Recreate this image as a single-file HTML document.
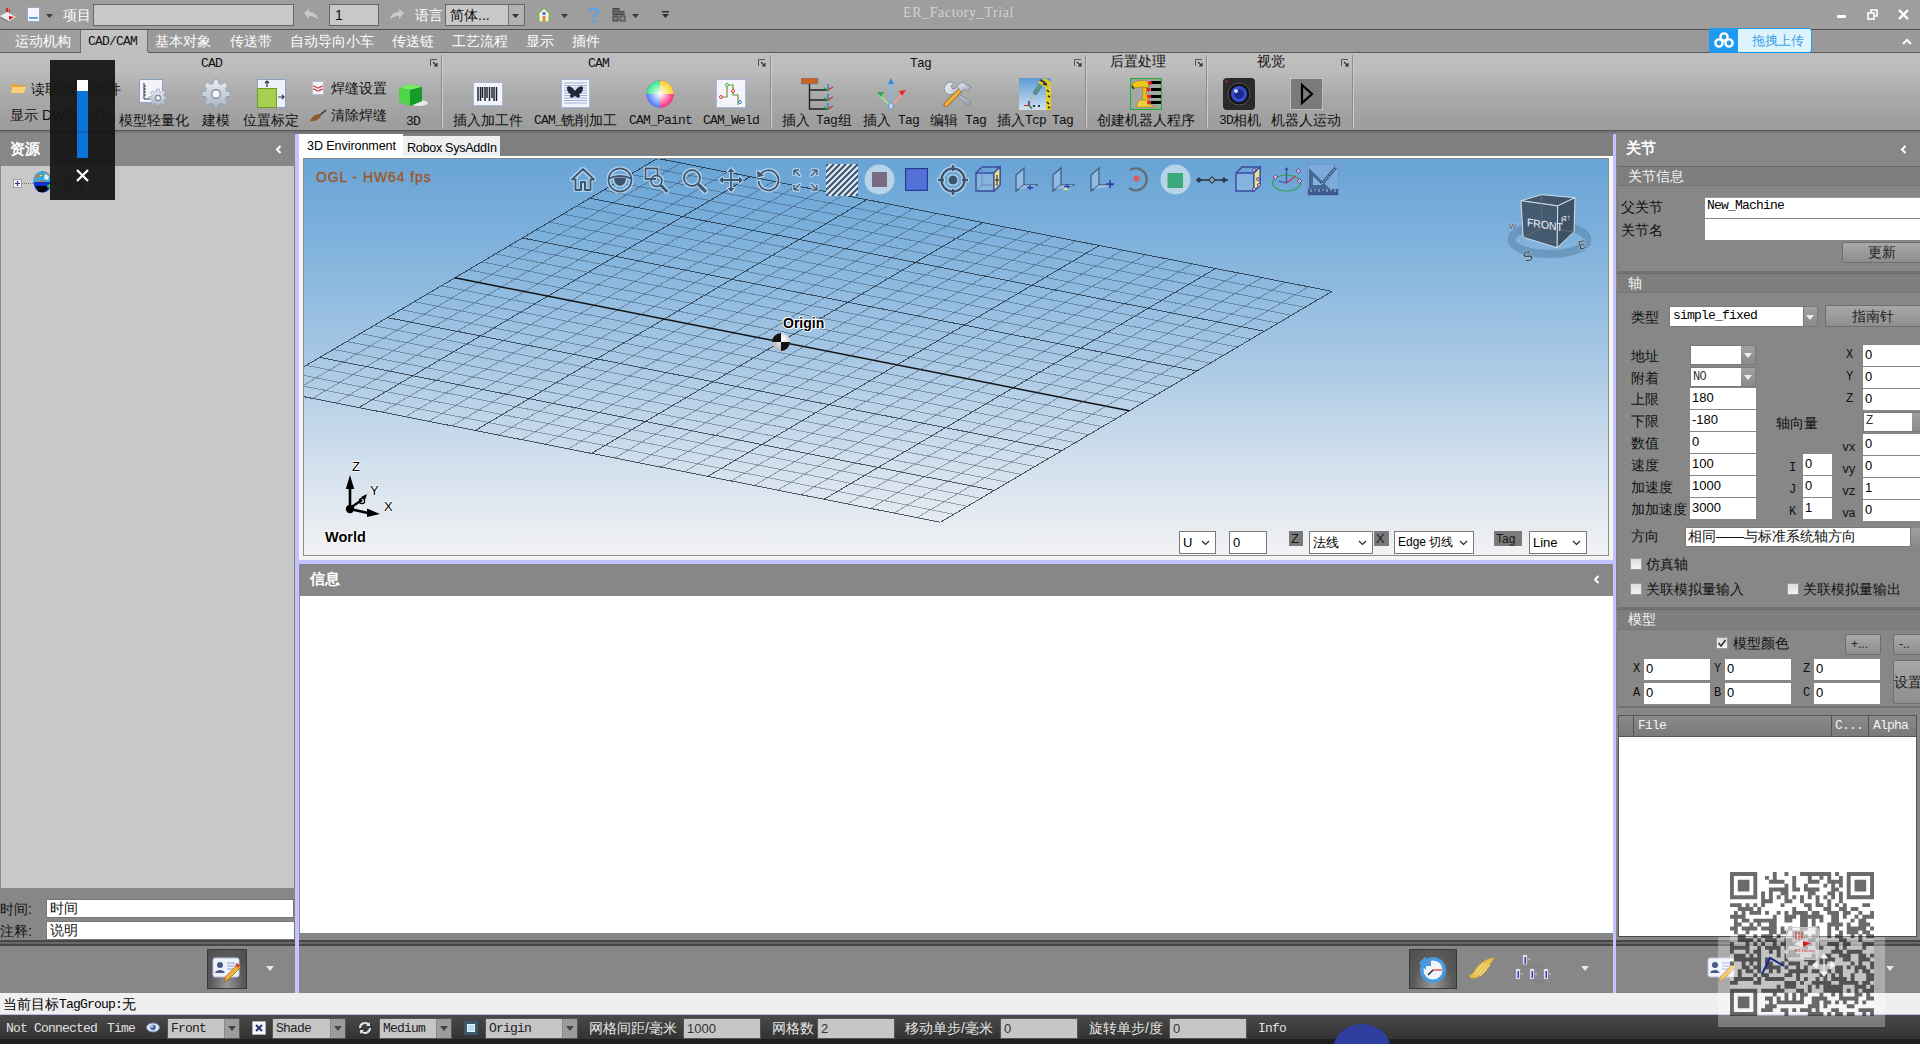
<!DOCTYPE html><html><head><meta charset='utf-8'><style>
*{box-sizing:border-box;margin:0;padding:0}
html,body{width:1920px;height:1044px;overflow:hidden;background:#9e9e9e;font-family:"Liberation Sans",sans-serif;font-size:14px;color:#000}
.a{position:absolute}
.ss{font-family:"Liberation Mono",monospace;font-size:13px;letter-spacing:-0.8px}
.t{position:absolute;white-space:nowrap;line-height:1}
.w{color:#fff}
.inp{position:absolute;background:#fff;border:1px solid #6d6d6d}
.ginp{position:absolute;background:#c8c8c8;border:1px solid #6a6a6a}
</style></head><body><div class="a" style="left:0px;top:0px;width:1920px;height:29px;background:#9e9e9e"></div>
<div class="a" style="left:0px;top:29px;width:1920px;height:1px;background:#4e4e4e"></div>
<div class="a" style="left:0px;top:30px;width:1920px;height:22px;background:#9a9a9a"></div>
<div class="a" style="left:0px;top:52px;width:1920px;height:1px;background:#5a5a5a"></div>
<div class="a" style="left:0px;top:53px;width:1920px;height:77px;background:linear-gradient(#bfbfbf,#bcbcbc 22%,#aaaaaa 55%,#9c9c9c)"></div>
<div class="a" style="left:0px;top:130px;width:1920px;height:1px;background:#555"></div>
<div class="a" style="left:0px;top:131px;width:1920px;height:863px;background:#7f7f7f"></div>
<svg class="a" style="left:0;top:7px" width="16" height="16" viewBox="0 0 16 16"><path d="M6 1h2v4H6zM9 2h1v3H9z" fill="#d22"/><path d="M0 9l7-4 9 5-7 4z" fill="#eee"/><path d="M9 9l5 1-5 3z" fill="#d11"/><path d="M1 10l7 4v1L0 11z" fill="#888"/></svg>
<svg class="a" style="left:27px;top:7px" width="13" height="15" viewBox="0 0 13 15"><rect x="0.5" y="0.5" width="12" height="14" fill="#f4f6fb" stroke="#9aa7c8"/><rect x="2" y="10" width="9" height="2" fill="#6aa6e0"/></svg>
<svg class="a" style="left:46px;top:14px" width="7" height="4"><path d="M0 0H7L3.5 4z" fill="#3a3a3a"/></svg>
<div class="t w" style="left:63px;top:8px;font-size:14px">项目</div>
<div class="a" style="left:93px;top:4px;width:201px;height:22px;background:#c8c8c8;border:1px solid #666"></div>
<svg class="a" style="left:303px;top:9px" width="16" height="12" viewBox="0 0 16 12"><path d="M1 4L6 0v3c5 0 9 3 9 8-2-3-5-4-9-4v3z" fill="#c9c9c9"/></svg>
<div class="a" style="left:329px;top:4px;width:50px;height:22px;background:#c8c8c8;border:1px solid #666"></div>
<div class="t " style="left:335px;top:8px;font-size:14px;color:#111">1</div>
<svg class="a" style="left:389px;top:9px" width="16" height="12" viewBox="0 0 16 12"><path d="M15 4L10 0v3C5 3 1 6 1 11c2-3 5-4 9-4v3z" fill="#c9c9c9"/></svg>
<div class="t w" style="left:415px;top:8px;font-size:14px">语言</div>
<div class="a" style="left:445px;top:4px;width:80px;height:22px;background:#c8c8c8;border:1px solid #666"></div>
<div class="a" style="left:508px;top:5px;width:16px;height:20px;background:#b2b2b2;border-left:1px solid #777"></div>
<svg class="a" style="left:512px;top:14px" width="7" height="4"><path d="M0 0H7L3.5 4z" fill="#333"/></svg>
<div class="t " style="left:450px;top:8px;font-size:14px;color:#111">简体...</div>
<svg class="a" style="left:536px;top:7px" width="16" height="15" viewBox="0 0 16 15"><path d="M8 1L1 8h2v7h10V8h2z" fill="#f3f3f7" stroke="#7fb14a" stroke-width="1.2"/><rect x="6.5" y="9" width="3" height="6" fill="#e08a2a"/><rect x="6.5" y="5" width="3" height="3" fill="#5577bb"/></svg>
<svg class="a" style="left:561px;top:14px" width="7" height="4"><path d="M0 0H7L3.5 4z" fill="#3a3a3a"/></svg>
<svg class="a" style="left:588px;top:7px" width="11" height="16" viewBox="0 0 11 16"><path d="M1.5 4.5C1.5 1 9.5 0 9.5 4.5c0 3-3.5 3-3.5 6" fill="none" stroke="#5aa3e8" stroke-width="2.6"/><circle cx="5.5" cy="14" r="1.7" fill="#5aa3e8"/></svg>
<svg class="a" style="left:612px;top:8px" width="14" height="14" viewBox="0 0 14 14"><rect x="1" y="0.5" width="6" height="6" fill="#666" stroke="#444"/><rect x="8.5" y="3.5" width="3.5" height="3" fill="#777" stroke="#444"/><rect x="1" y="8" width="5" height="5" fill="#777" stroke="#444"/><rect x="8" y="8" width="5" height="5" fill="#888" stroke="#444"/></svg>
<svg class="a" style="left:632px;top:14px" width="7" height="4"><path d="M0 0H7L3.5 4z" fill="#3a3a3a"/></svg>
<svg class="a" style="left:661px;top:11px" width="9" height="9" viewBox="0 0 9 9"><rect x="1" y="0" width="7" height="1.5" fill="#333"/><path d="M1 3h7L4.5 7z" fill="#333"/></svg>
<div class="t " style="left:903px;top:6px;font-family:'Liberation Serif',serif;font-size:14px;color:#d2d2d2;letter-spacing:0.6px">ER_Factory_Trial</div>
<div class="a" style="left:1837px;top:15px;width:9px;height:3px;background:#fff;border-radius:1px"></div>
<svg class="a" style="left:1867px;top:9px" width="12" height="11" viewBox="0 0 12 11"><rect x="1" y="4" width="6" height="6" fill="none" stroke="#fff" stroke-width="1.6"/><path d="M4 3.5V1h6v6H7.5" fill="none" stroke="#fff" stroke-width="1.6"/></svg>
<svg class="a" style="left:1898px;top:9px" width="11" height="11" viewBox="0 0 11 11"><path d="M1 1L10 10M10 1L1 10" stroke="#fff" stroke-width="2.4"/></svg>
<div class="a" style="left:0px;top:30px;width:81px;height:22px;background:#9f9f9f;border-right:1px solid #6e6e6e"></div>
<div class="a" style="left:81px;top:30px;width:67px;height:23px;background:linear-gradient(#c4c4c4,#bdbdbd)"></div>
<div class="a" style="left:147px;top:30px;width:1px;height:22px;background:#6e6e6e"></div>
<div class="t w" style="left:15px;top:34px;font-size:14px">运动机构</div>
<div class="t w" style="left:155px;top:34px;font-size:14px">基本对象</div>
<div class="t w" style="left:230px;top:34px;font-size:14px">传送带</div>
<div class="t w" style="left:290px;top:34px;font-size:14px">自动导向小车</div>
<div class="t w" style="left:392px;top:34px;font-size:14px">传送链</div>
<div class="t w" style="left:452px;top:34px;font-size:14px">工艺流程</div>
<div class="t w" style="left:526px;top:34px;font-size:14px">显示</div>
<div class="t w" style="left:572px;top:34px;font-size:14px">插件</div>
<div class="t ss" style="left:88px;top:35px;font-size:13px;color:#111">CAD/CAM</div>
<div class="a" style="left:1709px;top:28px;width:103px;height:25px;background:#def4fd;border:1px solid #1e9bf0;border-radius:3px"></div>
<div class="a" style="left:1709px;top:28px;width:29px;height:25px;background:#1e9bf0;border-radius:3px 0 0 3px"></div>
<svg class="a" style="left:1714px;top:32px" width="20" height="16" viewBox="0 0 20 16"><circle cx="10" cy="5" r="3.6" fill="none" stroke="#fff" stroke-width="2.4"/><circle cx="5" cy="11" r="3.6" fill="none" stroke="#fff" stroke-width="2.4"/><circle cx="15" cy="11" r="3.6" fill="none" stroke="#fff" stroke-width="2.4"/></svg>
<div class="t " style="left:1752px;top:34px;font-size:13px;color:#3aa0ea">拖拽上传</div>
<svg class="a" style="left:1902px;top:38px" width="10" height="7" viewBox="0 0 10 7"><path d="M1 6L5 2l4 4" fill="none" stroke="#fff" stroke-width="2"/></svg>
<div class="a" style="left:441px;top:55px;width:1px;height:73px;background:#8a8a8a;box-shadow:1px 0 0 #cfcfcf"></div>
<div class="a" style="left:770px;top:55px;width:1px;height:73px;background:#8a8a8a;box-shadow:1px 0 0 #cfcfcf"></div>
<div class="a" style="left:1085px;top:55px;width:1px;height:73px;background:#8a8a8a;box-shadow:1px 0 0 #cfcfcf"></div>
<div class="a" style="left:1206px;top:55px;width:1px;height:73px;background:#8a8a8a;box-shadow:1px 0 0 #cfcfcf"></div>
<div class="a" style="left:1352px;top:55px;width:1px;height:73px;background:#8a8a8a;box-shadow:1px 0 0 #cfcfcf"></div>
<svg class="a" style="left:430px;top:59px" width="8" height="8" viewBox="0 0 8 8"><path d="M0.5 7V0.5H7" fill="none" stroke="#555"/><path d="M3 3l4 4M7 4v3H4" fill="none" stroke="#333" stroke-width="1.2"/></svg>
<svg class="a" style="left:758px;top:59px" width="8" height="8" viewBox="0 0 8 8"><path d="M0.5 7V0.5H7" fill="none" stroke="#555"/><path d="M3 3l4 4M7 4v3H4" fill="none" stroke="#333" stroke-width="1.2"/></svg>
<svg class="a" style="left:1074px;top:59px" width="8" height="8" viewBox="0 0 8 8"><path d="M0.5 7V0.5H7" fill="none" stroke="#555"/><path d="M3 3l4 4M7 4v3H4" fill="none" stroke="#333" stroke-width="1.2"/></svg>
<svg class="a" style="left:1195px;top:59px" width="8" height="8" viewBox="0 0 8 8"><path d="M0.5 7V0.5H7" fill="none" stroke="#555"/><path d="M3 3l4 4M7 4v3H4" fill="none" stroke="#333" stroke-width="1.2"/></svg>
<svg class="a" style="left:1341px;top:59px" width="8" height="8" viewBox="0 0 8 8"><path d="M0.5 7V0.5H7" fill="none" stroke="#555"/><path d="M3 3l4 4M7 4v3H4" fill="none" stroke="#333" stroke-width="1.2"/></svg>
<div class="t ss" style="left:201px;top:57px;font-size:13px;color:#111">CAD</div>
<div class="t ss" style="left:588px;top:57px;font-size:13px;color:#111">CAM</div>
<div class="t ss" style="left:910px;top:57px;font-size:13px;color:#111">Tag</div>
<div class="t " style="left:1110px;top:54px;font-size:14px;color:#111">后置处理</div>
<div class="t " style="left:1257px;top:54px;font-size:14px;color:#111">视觉</div>
<svg class="a" style="left:11px;top:82px" width="15" height="12" viewBox="0 0 15 12"><path d="M0 2h5l1 1h7v8H0z" fill="#e9a53a"/><path d="M1 5h14l-2 6H0z" fill="#fbd27a"/></svg>
<div class="t " style="left:31px;top:82px;font-size:14px;color:#111">读取DWG文件</div>
<div class="t " style="left:10px;top:108px;font-size:14px;color:#111">显示 DWG 文件</div>
<svg class="a" style="left:139px;top:79px" width="30" height="29" viewBox="0 0 30 29"><defs><linearGradient id="gg" x1="0" y1="0" x2="0" y2="1"><stop offset="0" stop-color="#e9edf3"/><stop offset="1" stop-color="#a9b3c2"/></linearGradient></defs><rect x="0.5" y="0.5" width="23" height="23" fill="#f2f4fa" stroke="#8fa0c8"/><path d="M5 4v16h6M5 7h2M5 10h2M5 13h2M5 16h2" stroke="#333" fill="none"/><path d="M25.41 17.43L27.86 17.42L27.86 20.58L25.41 20.57L24.64 22.43L26.38 24.15L24.15 26.38L22.43 24.64L20.57 25.41L20.58 27.86L17.42 27.86L17.43 25.41L15.57 24.64L13.85 26.38L11.62 24.15L13.36 22.43L12.59 20.57L10.14 20.58L10.14 17.42L12.59 17.43L13.36 15.57L11.62 13.85L13.85 11.62L15.57 13.36L17.43 12.59L17.42 10.14L20.58 10.14L20.57 12.59L22.43 13.36L24.15 11.62L26.38 13.85L24.64 15.57z" fill="url(#gg)" stroke="#8d97a8" stroke-width="0.7"/><circle cx="19" cy="19" r="2.6" fill="#f2f4f8" stroke="#7d889a" stroke-width="1.2"/></svg>
<svg class="a" style="left:201px;top:79px" width="30" height="30" viewBox="0 0 30 30"><path d="M25.69 12.39L29.27 12.45L29.27 17.55L25.69 17.61L24.40 20.71L26.90 23.29L23.29 26.90L20.71 24.40L17.61 25.69L17.55 29.27L12.45 29.27L12.39 25.69L9.29 24.40L6.71 26.90L3.10 23.29L5.60 20.71L4.31 17.61L0.73 17.55L0.73 12.45L4.31 12.39L5.60 9.29L3.10 6.71L6.71 3.10L9.29 5.60L12.39 4.31L12.45 0.73L17.55 0.73L17.61 4.31L20.71 5.60L23.29 3.10L26.90 6.71L24.40 9.29z" fill="url(#gg)" stroke="#8d97a8" stroke-width="0.8"/><circle cx="15" cy="15" r="5.2" fill="#8e99ab"/><circle cx="15" cy="15" r="3.6" fill="#f4f6f9"/></svg>
<div class="t " style="left:119px;top:113px;font-size:14px;color:#111">模型轻量化</div>
<div class="t " style="left:202px;top:113px;font-size:14px;color:#111">建模</div>
<svg class="a" style="left:257px;top:79px" width="29" height="29" viewBox="0 0 29 29"><rect x="0.5" y="0.5" width="28" height="28" fill="#eef1f8" stroke="#8fa0c8"/><rect x="0.5" y="9.5" width="19" height="19" fill="#a8d050" stroke="#6f9c2a"/><path d="M10 2v6M8 4l2-2 2 2M21 18h6M25 16l2 2-2 2" stroke="#335" fill="none" stroke-width="1.2"/></svg>
<div class="t " style="left:243px;top:113px;font-size:14px;color:#111">位置标定</div>
<svg class="a" style="left:312px;top:81px" width="12" height="14" viewBox="0 0 12 14"><rect x="0.5" y="0.5" width="11" height="13" fill="#f2f3f7" stroke="#b8bfd0"/><path d="M1 5c3 0 3 2 5 2s3-2 5-2M1 8c3 0 3 2 5 2s3-2 5-2" stroke="#d22" fill="none" stroke-width="1.2"/></svg>
<div class="t " style="left:331px;top:81px;font-size:14px;color:#111">焊缝设置</div>
<svg class="a" style="left:310px;top:109px" width="17" height="14" viewBox="0 0 17 14"><path d="M10 6L16 1" stroke="#333" stroke-width="1.6"/><path d="M0 12c2-4 5-7 10-7l1 2C9 11 4 13 0 12z" fill="#8a5a2a"/></svg>
<div class="t " style="left:331px;top:108px;font-size:14px;color:#111">清除焊缝</div>
<svg class="a" style="left:397px;top:82px" width="32" height="26" viewBox="0 0 32 26"><ellipse cx="22" cy="21" rx="9" ry="3" fill="#e8eaea"/><path d="M2 6l11-4 12 3v14l-12 5-11-4z" fill="#2db43a"/><path d="M2 6l11-4 12 3-12 3z" fill="#7ee86a"/><path d="M2 6l11 2v16l-11-4z" fill="#4fd44a"/><path d="M13 8l12-3v14l-12 5z" fill="#199b2a"/></svg>
<div class="t ss" style="left:406px;top:115px;font-size:13px;color:#111">3D</div>
<svg class="a" style="left:473px;top:82px" width="30" height="24" viewBox="0 0 30 24"><rect x="0.5" y="0.5" width="29" height="23" fill="#f3f5fb" stroke="#a8b6d8"/><path d="M5 5v14M7.5 5v14M9.5 5v11M12 5v14M14 5v11M16.5 5v14M19 5v11M21 5v14M23.5 5v14" stroke="#1b2330" stroke-width="1.5"/></svg>
<div class="t " style="left:453px;top:113px;font-size:14px;color:#111">插入加工件</div>
<svg class="a" style="left:561px;top:79px" width="29" height="29" viewBox="0 0 29 29"><rect x="0.5" y="0.5" width="28" height="28" fill="#f2f4fb" stroke="#a8b6d8"/><path d="M3 4h23M3 6.5h23M3 9h23M3 11.5h23M3 14h23M3 16.5h23M3 19h23M3 21.5h23M3 24h23" stroke="#8aa0d0" stroke-width="0.8"/><path d="M14 12c-3-5-8-6-8-3 0 3 2 6 4 6-2 2-1 6 4 2 5 4 6 0 4-2 2 0 4-3 4-6 0-3-5-2-8 3z" fill="#1f2937"/></svg>
<div class="t ss" style="left:534px;top:114px;font-size:13px;color:#111">CAM_</div>
<div class="t " style="left:561px;top:113px;font-size:14px;color:#111">铣削加工</div>
<svg class="a" style="left:646px;top:80px" width="28" height="28" viewBox="0 0 28 28"><defs><radialGradient id="wg" cx="50%" cy="50%" r="50%"><stop offset="0" stop-color="#fff"/><stop offset="1" stop-color="#fff" stop-opacity="0"/></radialGradient></defs><circle cx="14" cy="14" r="13.5" fill="#f0f"/><path d="M14 14L14 0.5A13.5 13.5 0 0 1 27.5 14z" fill="#f9d423"/><path d="M14 14L27.5 14A13.5 13.5 0 0 1 14 27.5z" fill="#ff2e7e"/><path d="M14 14L14 27.5A13.5 13.5 0 0 1 0.5 14z" fill="#4a7cff"/><path d="M14 14L0.5 14A13.5 13.5 0 0 1 14 0.5z" fill="#2ee88a"/><circle cx="14" cy="14" r="13.5" fill="url(#wg)"/></svg>
<div class="t ss" style="left:629px;top:114px;font-size:13px;color:#111">CAM_Paint</div>
<svg class="a" style="left:716px;top:79px" width="30" height="29" viewBox="0 0 30 29"><rect x="0.5" y="0.5" width="29" height="28" fill="#f3f5fb" stroke="#a8b6d8"/><path d="M5 18h6V6h6v10h5v10" fill="none" stroke="#6a9a2a" stroke-width="1.2"/><circle cx="5" cy="18" r="1.5" fill="#fff" stroke="#d33"/><circle cx="11" cy="6" r="1.5" fill="#fff" stroke="#4a4"/><circle cx="17" cy="12" r="1.5" fill="#fff" stroke="#d33"/><circle cx="24" cy="23" r="1.5" fill="#fff" stroke="#37c"/></svg>
<div class="t ss" style="left:703px;top:114px;font-size:13px;color:#111">CAM_Weld</div>
<svg class="a" style="left:801px;top:78px" width="33" height="32" viewBox="0 0 33 32"><rect x="0" y="0" width="17" height="6" fill="#c8641e" stroke="#5a7bbd" stroke-width="0.6"/><path d="M8.5 6v25h19M8.5 12h19M8.5 22h19" stroke="#222" fill="none" stroke-width="1.4"/><g id="ax"><path d="M27 12V6M27 12l5-3M27 12l-4-2" stroke-width="1.3" fill="none"/></g><path d="M27 12V6" stroke="#2a7be0" stroke-width="1.4"/><path d="M27 12l5-3" stroke="#e02a2a" stroke-width="1.4"/><path d="M27 12l-4-2" stroke="#2ab04a" stroke-width="1.4"/><path d="M27 22V16" stroke="#2a7be0" stroke-width="1.4"/><path d="M27 22l5-3" stroke="#e02a2a" stroke-width="1.4"/><path d="M27 22l-4-2" stroke="#2ab04a" stroke-width="1.4"/><path d="M27 31v-6" stroke="#2a7be0" stroke-width="1.4"/><path d="M27 31l5-3" stroke="#e02a2a" stroke-width="1.4"/><path d="M27 31l-4-2" stroke="#2ab04a" stroke-width="1.4"/></svg>
<div class="t " style="left:782px;top:113px;font-size:14px;color:#111">插入</div>
<div class="t ss" style="left:816px;top:114px;font-size:13px;color:#111">Tag</div>
<div class="t " style="left:838px;top:113px;font-size:14px;color:#111">组</div>
<svg class="a" style="left:875px;top:78px" width="32" height="32" viewBox="0 0 32 32"><path d="M16 28V4" stroke="#7ab8f0" stroke-width="2"/><path d="M13 6l3-6 3 6z" fill="#2a8be0"/><path d="M16 28L4 17" stroke="#9ee0a0" stroke-width="2"/><path d="M2 14l7 0-3 5z" fill="#2ab04a"/><path d="M16 28L29 15" stroke="#f0a0a0" stroke-width="2"/><path d="M31 12l-7 1 3 5z" fill="#e02a2a"/><ellipse cx="16" cy="28" rx="2.5" ry="3.5" fill="#bcd4f0" stroke="#6a8ac0"/></svg>
<div class="t " style="left:863px;top:113px;font-size:14px;color:#111">插入</div>
<div class="t ss" style="left:898px;top:114px;font-size:13px;color:#111">Tag</div>
<svg class="a" style="left:943px;top:81px" width="30" height="26" viewBox="0 0 30 26"><defs><linearGradient id="sil" x1="0" y1="0" x2="1" y2="1"><stop offset="0" stop-color="#eef1f5"/><stop offset="1" stop-color="#9aa4b4"/></linearGradient></defs><path d="M3 3.5a6 6 0 0 1 8-1.5l-3 3 1.5 3 3-0.5 2.5-3a6 6 0 0 1-2 7.5L27 19.5a2.6 2.6 0 0 1-3.5 3.8L11.5 12a6 6 0 0 1-8.5-8.5z" fill="url(#sil)" stroke="#7a8496" stroke-width="0.8"/><path d="M3 23.5L17 9.5" stroke="#9a6a20" stroke-width="5" stroke-linecap="round"/><path d="M3 23.5L17 9.5" stroke="#f0b040" stroke-width="3.2" stroke-linecap="round"/><path d="M14 5l5-4 9 5-3 4-4-2-3 3z" fill="url(#sil)" stroke="#7a8496" stroke-width="0.8"/></svg>
<div class="t " style="left:930px;top:113px;font-size:14px;color:#111">编辑</div>
<div class="t ss" style="left:965px;top:114px;font-size:13px;color:#111">Tag</div>
<svg class="a" style="left:1019px;top:78px" width="32" height="32" viewBox="0 0 32 32"><defs><linearGradient id="sky" x1="0" y1="0" x2="0" y2="1"><stop offset="0" stop-color="#5e9cd6"/><stop offset="1" stop-color="#cfe0f0"/></linearGradient></defs><rect width="32" height="32" fill="url(#sky)"/><path d="M27 9h5v23h-5z" fill="#e8d020"/><path d="M28 12l2 2M29 18l2 1M28 24l2 2M29 29l2 1" stroke="#222" stroke-width="1.6"/><path d="M19 4l7-4 6 4v7l-6-2-5-2z" fill="#d8c830"/><path d="M21 2l4 2 3 3M24 6l4 1" stroke="#333" stroke-width="1.6"/><path d="M14 15l6-9 3 2-6 9z" fill="#5a9a8a" stroke="#2a5a5a" stroke-width="0.5"/><path d="M15 16l-4 6-1 5" fill="none" stroke="#c8b070" stroke-width="1"/><path d="M10 27.5H5M10 27.5V23M10 27.5l3 3" stroke="#e02020" stroke-width="1.2"/><path d="M10 27.5V23" stroke="#2040e0" stroke-width="1.2"/><path d="M10 27.5l3 3" stroke="#20a020" stroke-width="1.2"/><circle cx="15" cy="28" r="1.1" fill="#111"/><circle cx="20" cy="28" r="1.1" fill="#111"/></svg>
<div class="t " style="left:997px;top:113px;font-size:14px;color:#111">插入</div>
<div class="t ss" style="left:1025px;top:114px;font-size:13px;color:#111">Tcp</div>
<div class="t ss" style="left:1052px;top:114px;font-size:13px;color:#111">Tag</div>
<svg class="a" style="left:1130px;top:78px" width="32" height="32" viewBox="0 0 32 32"><rect x="0.5" y="0.5" width="31" height="31" fill="#a6a6a6" stroke="#22b030" stroke-width="1.2"/><path d="M21 3h10v3H21zM21 10h10v3H21zM21 17h10v3H21zM21 23h10v3H21z" fill="#000"/><path d="M2 6c3-3 8-4 14-3l3 3-2 4-5-1-8 1z" fill="#f0c818" stroke="#8a7010" stroke-width="0.5"/><path d="M12 9l5 1-1 6 3 3-2 4-3 1-2-4 1-5z" fill="#e8c018" stroke="#8a7010" stroke-width="0.5"/><path d="M9 22h9l2 4 5 3H6z" fill="#f0d040" stroke="#8a7010" stroke-width="0.5"/><path d="M2 8l2 3" stroke="#333" stroke-width="1.4"/><circle cx="20" cy="5" r="2" fill="#e82020"/><circle cx="18.5" cy="11.5" r="2" fill="#e82020"/><circle cx="19" cy="18.5" r="2" fill="#e82020"/><circle cx="19" cy="24.5" r="2" fill="#e82020"/></svg>
<div class="t " style="left:1097px;top:113px;font-size:14px;color:#111">创建机器人程序</div>
<svg class="a" style="left:1223px;top:78px" width="32" height="32" viewBox="0 0 32 32"><rect x="0" y="0" width="32" height="32" rx="4" fill="#2a2a2a"/><circle cx="16" cy="16" r="11" fill="#111" stroke="#555"/><circle cx="16" cy="16" r="8" fill="#3a4bd0"/><circle cx="16" cy="16" r="5" fill="#1c2a8a"/><circle cx="13" cy="13" r="2" fill="#cfe0ff"/><circle cx="3.5" cy="3.5" r="1" fill="#e33"/></svg>
<div class="t ss" style="left:1219px;top:114px;font-size:13px;color:#111">3D</div>
<div class="t " style="left:1233px;top:113px;font-size:14px;color:#111">相机</div>
<svg class="a" style="left:1290px;top:78px" width="33" height="32" viewBox="0 0 33 32"><rect x="0" y="0" width="33" height="32" fill="#7a7a7a" stroke="#fff" stroke-width="1"/><path d="M12 7v18l10-9z" fill="none" stroke="#000" stroke-width="2.2"/></svg>
<div class="t " style="left:1271px;top:113px;font-size:14px;color:#111">机器人运动</div>
<div class="a" style="left:0px;top:131px;width:295px;height:35px;background:#878787"></div>
<div class="a" style="left:0px;top:166px;width:294px;height:722px;background:#c8c8c8;border-left:1px solid #8a8a8a"></div>
<div class="a" style="left:0px;top:888px;width:295px;height:52px;background:#878787"></div>
<div class="a" style="left:46px;top:899px;width:248px;height:19px;background:#fff;border:1px solid #777"></div>
<div class="a" style="left:46px;top:921px;width:249px;height:19px;background:#fff;border:1px solid #777"></div>
<div class="a" style="left:0px;top:940px;width:295px;height:6px;background:linear-gradient(#474747 0,#474747 2px,#6a6a6a 2px,#646464 4px,#474747 4px)"></div>
<div class="a" style="left:0px;top:946px;width:295px;height:47px;background:#878787"></div>
<div class="a" style="left:295px;top:134px;width:4px;height:859px;background:#c2c2fc"></div>
<div class="a" style="left:299px;top:131px;width:1314px;height:25px;background:#7f7f7f"></div>
<div class="a" style="left:299px;top:156px;width:1314px;height:404px;background:#eaeaea"></div>
<div class="a" style="left:303px;top:158px;width:1306px;height:398px;background:linear-gradient(#68a4d5,#a9c9e3 50%,#f2f2f4)"></div>
<div class="a" style="left:299px;top:560px;width:1314px;height:4px;background:#c2c2fc"></div>
<div class="a" style="left:299px;top:564px;width:1314px;height:32px;background:#878787"></div>
<div class="a" style="left:299px;top:596px;width:1314px;height:338px;background:#fff;border-left:1px solid #8a8a8a;border-bottom:1px solid #7a8290"></div>
<div class="a" style="left:299px;top:934px;width:1314px;height:6px;background:#878787"></div>
<div class="a" style="left:299px;top:940px;width:1314px;height:6px;background:linear-gradient(#474747 0,#474747 2px,#6a6a6a 2px,#646464 4px,#474747 4px)"></div>
<div class="a" style="left:299px;top:946px;width:1314px;height:47px;background:#878787"></div>
<div class="a" style="left:1613px;top:134px;width:3px;height:859px;background:#c2c2fc"></div>
<div class="a" style="left:1616px;top:131px;width:304px;height:863px;background:#878787"></div>
<div class="t w" style="left:10px;top:141px;font-size:15px;font-weight:bold">资源</div>
<svg class="a" style="left:275px;top:145px" width="7" height="9" viewBox="0 0 7 9"><path d="M5.5 1L2 4.5 5.5 8" fill="none" stroke="#fff" stroke-width="2"/></svg>
<div class="a" style="left:13px;top:179px;width:9px;height:9px;background:#f4f4f4;border:1px solid #9aa0aa"></div>
<svg class="a" style="left:13px;top:179px" width="9" height="9"><path d="M2 4.5h5M4.5 2v5" stroke="#2a3a8a" stroke-width="1.2"/></svg>
<svg class="a" style="left:22px;top:183px" width="11" height="1"><path d="M0 .5h11" stroke="#777" stroke-dasharray="1 1"/></svg>
<svg class="a" style="left:33px;top:171px" width="19" height="22" viewBox="0 0 19 22"><clipPath id="gc"><ellipse cx="9.5" cy="11" rx="9" ry="10.8"/></clipPath><g clip-path="url(#gc)"><rect width="19" height="22" fill="#1030d0"/><rect width="19" height="11" fill="#30b0e0"/><path d="M2 3h8v3H5v2H2zM11 1h5l2 4-3 1zM4 9h9v2H4z" fill="#8a8a8a"/><path d="M12 3l4 2-1 4-4-1z" fill="#d8f0ff"/><path d="M3 15h10l2 3-4 3H5z" fill="#050505"/><path d="M14 14l3-1 1 3-3 1z" fill="#30c030"/><rect x="7" y="4" width="2" height="1" fill="#e8f020"/></g></svg>
<div class="t " style="left:59px;top:177px;font-size:14px;color:#222">世界</div>
<div class="t " style="left:0px;top:902px;font-size:14px;color:#111">时间:</div>
<div class="t " style="left:0px;top:924px;font-size:14px;color:#111">注释:</div>
<div class="t " style="left:50px;top:901px;font-size:14px;color:#111">时间</div>
<div class="t " style="left:50px;top:923px;font-size:14px;color:#111">说明</div>
<div class="a" style="left:207px;top:949px;width:40px;height:40px;background:radial-gradient(ellipse at 50% 100%,#9a9a9a,#5a5a5a 60%,#4e4e4e);border:1px solid #3a3a3a"></div>
<svg class="a" style="left:212px;top:956px" width="30" height="28" viewBox="0 0 30 28"><rect x="1" y="2" width="26" height="19" rx="2" fill="#eef2fb" stroke="#b8c4dc"/><circle cx="8" cy="9" r="3" fill="#4a5a80"/><path d="M3 17c1-4 9-4 10 0z" fill="#4a5a80"/><path d="M15 7h8M15 10h8M15 13h6" stroke="#8aa0c8"/><path d="M12 26l2-6 12-12 3 3-12 12z" fill="#f0b030" stroke="#8a5a10" stroke-width="0.6"/><path d="M23 9l3 3 2-2-3-3z" fill="#e04040"/></svg>
<svg class="a" style="left:266px;top:966px" width="8" height="5"><path d="M0 0H8L4.0 5z" fill="#e8e8e8"/></svg>
<div class="a" style="left:50px;top:60px;width:65px;height:140px;background:rgba(24,24,24,0.96)"></div>
<div class="a" style="left:77px;top:80px;width:11px;height:11px;background:#fff"></div>
<div class="a" style="left:77px;top:91px;width:11px;height:67px;background:#0a74d8"></div>
<svg class="a" style="left:75px;top:168px" width="15" height="15" viewBox="0 0 15 15"><path d="M2 2l11 11M13 2L2 13" stroke="#fff" stroke-width="2.3"/></svg>
<div class="a" style="left:299px;top:134px;width:104px;height:23px;background:#fff"></div>
<div class="t " style="left:307px;top:140px;font-size:12.6px;color:#000;letter-spacing:-0.1px">3D Environment</div>
<div class="a" style="left:403px;top:136px;width:97px;height:21px;background:#efefef"></div>
<div class="t " style="left:407px;top:142px;font-size:12.6px;color:#000;letter-spacing:-0.3px">Robox SysAddIn</div>
<div class="a" style="left:299px;top:156px;width:1314px;height:404px;background:#f4f4f4;border-top:2px solid #fff"></div>
<div class="a" style="left:303px;top:158px;width:1306px;height:398px;background:#8c8c8c"></div>
<div class="a" style="left:304px;top:159px;width:1304px;height:396px;background:linear-gradient(#68a4d5 0%,#7eb1dc 20%,#a6c7e4 50%,#cfdeec 75%,#f2f2f4 100%)"></div>
<svg class="a" style="left:304px;top:159px" width="1304" height="396" viewBox="0 0 1304 396" shape-rendering="crispEdges"><path d="M-38.1 230.2L353.4 -0.6" stroke="#1a2632" stroke-opacity="0.75" stroke-width="1"/><path d="M-38.1 230.2L636.4 363.2" stroke="#1a2632" stroke-opacity="0.75" stroke-width="1"/><path d="M-14.9 234.8L376.6 4.0" stroke="#2e4052" stroke-opacity="0.42" stroke-width="1"/><path d="M-24.6 222.3L649.9 355.3" stroke="#2e4052" stroke-opacity="0.42" stroke-width="1"/><path d="M8.4 239.4L399.9 8.6" stroke="#2e4052" stroke-opacity="0.42" stroke-width="1"/><path d="M-11.1 214.3L663.4 347.3" stroke="#2e4052" stroke-opacity="0.42" stroke-width="1"/><path d="M31.6 244.0L423.1 13.2" stroke="#2e4052" stroke-opacity="0.42" stroke-width="1"/><path d="M2.4 206.4L676.9 339.4" stroke="#2e4052" stroke-opacity="0.42" stroke-width="1"/><path d="M54.9 248.6L446.4 17.7" stroke="#1a2632" stroke-opacity="0.75" stroke-width="1"/><path d="M15.9 198.4L690.4 331.4" stroke="#1a2632" stroke-opacity="0.75" stroke-width="1"/><path d="M78.2 253.2L469.7 22.3" stroke="#2e4052" stroke-opacity="0.42" stroke-width="1"/><path d="M29.4 190.4L703.9 323.4" stroke="#2e4052" stroke-opacity="0.42" stroke-width="1"/><path d="M101.4 257.8L492.9 26.9" stroke="#2e4052" stroke-opacity="0.42" stroke-width="1"/><path d="M42.9 182.5L717.4 315.5" stroke="#2e4052" stroke-opacity="0.42" stroke-width="1"/><path d="M124.7 262.3L516.2 31.5" stroke="#2e4052" stroke-opacity="0.42" stroke-width="1"/><path d="M56.4 174.5L730.9 307.5" stroke="#2e4052" stroke-opacity="0.42" stroke-width="1"/><path d="M147.9 266.9L539.4 36.1" stroke="#2e4052" stroke-opacity="0.42" stroke-width="1"/><path d="M69.9 166.6L744.4 299.6" stroke="#2e4052" stroke-opacity="0.42" stroke-width="1"/><path d="M171.2 271.5L562.7 40.7" stroke="#1a2632" stroke-opacity="0.75" stroke-width="1"/><path d="M83.4 158.6L757.9 291.6" stroke="#1a2632" stroke-opacity="0.75" stroke-width="1"/><path d="M194.5 276.1L586.0 45.3" stroke="#2e4052" stroke-opacity="0.42" stroke-width="1"/><path d="M96.9 150.6L771.4 283.6" stroke="#2e4052" stroke-opacity="0.42" stroke-width="1"/><path d="M217.7 280.7L609.2 49.8" stroke="#2e4052" stroke-opacity="0.42" stroke-width="1"/><path d="M110.4 142.7L784.9 275.7" stroke="#2e4052" stroke-opacity="0.42" stroke-width="1"/><path d="M241.0 285.3L632.5 54.4" stroke="#2e4052" stroke-opacity="0.42" stroke-width="1"/><path d="M123.9 134.7L798.4 267.7" stroke="#2e4052" stroke-opacity="0.42" stroke-width="1"/><path d="M264.2 289.9L655.7 59.0" stroke="#2e4052" stroke-opacity="0.42" stroke-width="1"/><path d="M137.4 126.8L811.9 259.8" stroke="#2e4052" stroke-opacity="0.42" stroke-width="1"/><path d="M287.5 294.4L679.0 63.6" stroke="#1a2632" stroke-opacity="0.75" stroke-width="1"/><path d="M150.9 118.8L825.4 251.8" stroke="#111" stroke-width="1.5" shape-rendering="geometricPrecision"/><path d="M310.8 299.0L702.3 68.2" stroke="#2e4052" stroke-opacity="0.42" stroke-width="1"/><path d="M164.4 110.8L838.9 243.8" stroke="#2e4052" stroke-opacity="0.42" stroke-width="1"/><path d="M334.0 303.6L725.5 72.8" stroke="#2e4052" stroke-opacity="0.42" stroke-width="1"/><path d="M177.9 102.9L852.4 235.9" stroke="#2e4052" stroke-opacity="0.42" stroke-width="1"/><path d="M357.3 308.2L748.8 77.4" stroke="#2e4052" stroke-opacity="0.42" stroke-width="1"/><path d="M191.4 94.9L865.9 227.9" stroke="#2e4052" stroke-opacity="0.42" stroke-width="1"/><path d="M380.5 312.8L772.0 81.9" stroke="#2e4052" stroke-opacity="0.42" stroke-width="1"/><path d="M204.9 87.0L879.4 219.9" stroke="#2e4052" stroke-opacity="0.42" stroke-width="1"/><path d="M403.8 317.4L795.3 86.5" stroke="#1a2632" stroke-opacity="0.75" stroke-width="1"/><path d="M218.4 79.0L892.9 212.0" stroke="#1a2632" stroke-opacity="0.75" stroke-width="1"/><path d="M427.1 322.0L818.6 91.1" stroke="#2e4052" stroke-opacity="0.42" stroke-width="1"/><path d="M231.9 71.0L906.4 204.0" stroke="#2e4052" stroke-opacity="0.42" stroke-width="1"/><path d="M450.3 326.5L841.8 95.7" stroke="#2e4052" stroke-opacity="0.42" stroke-width="1"/><path d="M245.4 63.1L919.9 196.1" stroke="#2e4052" stroke-opacity="0.42" stroke-width="1"/><path d="M473.6 331.1L865.1 100.3" stroke="#2e4052" stroke-opacity="0.42" stroke-width="1"/><path d="M258.9 55.1L933.4 188.1" stroke="#2e4052" stroke-opacity="0.42" stroke-width="1"/><path d="M496.8 335.7L888.3 104.9" stroke="#2e4052" stroke-opacity="0.42" stroke-width="1"/><path d="M272.4 47.2L946.9 180.1" stroke="#2e4052" stroke-opacity="0.42" stroke-width="1"/><path d="M520.1 340.3L911.6 109.5" stroke="#1a2632" stroke-opacity="0.75" stroke-width="1"/><path d="M285.9 39.2L960.4 172.2" stroke="#1a2632" stroke-opacity="0.75" stroke-width="1"/><path d="M543.4 344.9L934.9 114.0" stroke="#2e4052" stroke-opacity="0.42" stroke-width="1"/><path d="M299.4 31.2L973.9 164.2" stroke="#2e4052" stroke-opacity="0.42" stroke-width="1"/><path d="M566.6 349.5L958.1 118.6" stroke="#2e4052" stroke-opacity="0.42" stroke-width="1"/><path d="M312.9 23.3L987.4 156.3" stroke="#2e4052" stroke-opacity="0.42" stroke-width="1"/><path d="M589.9 354.1L981.4 123.2" stroke="#2e4052" stroke-opacity="0.42" stroke-width="1"/><path d="M326.4 15.3L1000.9 148.3" stroke="#2e4052" stroke-opacity="0.42" stroke-width="1"/><path d="M613.1 358.6L1004.6 127.8" stroke="#2e4052" stroke-opacity="0.42" stroke-width="1"/><path d="M339.9 7.4L1014.4 140.4" stroke="#2e4052" stroke-opacity="0.42" stroke-width="1"/><path d="M636.4 363.2L1027.9 132.4" stroke="#1a2632" stroke-opacity="0.75" stroke-width="1"/><path d="M353.4 -0.6L1027.9 132.4" stroke="#1a2632" stroke-opacity="0.75" stroke-width="1"/></svg>
<div class="t " style="left:316px;top:170px;font-size:14px;color:#a35520;letter-spacing:0.9px;-webkit-text-stroke:0.3px #a35520">OGL - HW64 fps</div>
<svg class="a" style="left:771px;top:332px" width="20" height="20" viewBox="0 0 20 20"><defs><radialGradient id="sg" cx="60%" cy="35%" r="60%"><stop offset="0" stop-color="#fff"/><stop offset="1" stop-color="#bbb"/></radialGradient></defs><circle cx="10" cy="10" r="9" fill="url(#sg)"/><path d="M10 1A9 9 0 0 0 1 10H10z" fill="#111"/><path d="M10 10H19A9 9 0 0 1 10 19z" fill="#111"/></svg>
<div class="t " style="left:783px;top:316px;font-size:14px;font-weight:bold;color:#000;-webkit-text-stroke:0;text-shadow:1px 0 #fff,-1px 0 #fff,0 1px #fff,0 -1px #fff,1px 1px #fff,-1px -1px #fff">Origin</div>
<svg class="a" style="left:320px;top:450px" width="100" height="100" viewBox="0 0 100 100"><path d="M30 59V37" stroke="#000" stroke-width="2.6"/><path d="M25.8 39L30 25l4.2 14z" fill="#000"/><path d="M30 59l18 4" stroke="#000" stroke-width="2.6"/><path d="M47 58.5l13 5.5-13 3z" fill="#000"/><path d="M30 58l12-8" stroke="#000" stroke-width="2.2"/><path d="M41 47l6-3-2 6z" fill="#000"/><circle cx="42" cy="51" r="2.6" fill="none" stroke="#000" stroke-width="1.2"/><circle cx="30" cy="59" r="4.2" fill="#000"/></svg>
<div class="t " style="left:352px;top:460px;font-size:13px;color:#000;text-shadow:1px 0 #fff,-1px 0 #fff,0 1px #fff,0 -1px #fff">Z</div>
<div class="t " style="left:370px;top:484px;font-size:13px;color:#000;text-shadow:1px 0 #fff,-1px 0 #fff,0 1px #fff,0 -1px #fff">Y</div>
<div class="t " style="left:384px;top:500px;font-size:13px;color:#000;text-shadow:1px 0 #fff,-1px 0 #fff,0 1px #fff,0 -1px #fff">X</div>
<div class="t " style="left:325px;top:530px;font-size:14.5px;font-weight:bold;color:#000;text-shadow:1px 0 #fff,-1px 0 #fff,0 1px #fff,0 -1px #fff">World</div>
<svg width="0" height="0" style="position:absolute"><defs><filter id="halo" x="-20%" y="-20%" width="140%" height="140%"><feMorphology in="SourceAlpha" operator="dilate" radius="1" result="d"/><feFlood flood-color="#c4dcf0" flood-opacity="0.8"/><feComposite in2="d" operator="in" result="h"/><feMerge><feMergeNode in="h"/><feMergeNode in="SourceGraphic"/></feMerge></filter></defs></svg>
<svg class="a" style="left:570px;top:167px;overflow:visible" width="26" height="25" viewBox="0 0 26 25"><path d="M13 2L2 12.5h3.5V23h5.5v-8h4v8h5.5V12.5H24z" fill="none" stroke="#3b5570" stroke-width="2" stroke-linejoin="round" filter="url(#halo)"/></svg>
<svg class="a" style="left:607px;top:167px;overflow:visible" width="26" height="26" viewBox="0 0 26 26"><g filter="url(#halo)"><circle cx="13" cy="13" r="11.5" fill="none" stroke="#3b5570" stroke-width="1.8"/><path d="M2 12c6-4 16-4 22 0" fill="none" stroke="#3b5570" stroke-width="1.8"/><path d="M7 11c0 5 3 8 6 8s6-3 6-8c-4-1-8-1-12 0z" fill="#3b5570"/></g></svg>
<svg class="a" style="left:644px;top:167px;overflow:visible" width="26" height="26" viewBox="0 0 26 26"><g filter="url(#halo)"><path d="M12 12H1.5V1.5h12v8" fill="none" stroke="#3b5570" stroke-width="1.8"/><circle cx="12.5" cy="14" r="5.5" fill="none" stroke="#3b5570" stroke-width="1.8"/><path d="M16.5 18l7 7" stroke="#3b5570" stroke-width="3"/></g></svg>
<svg class="a" style="left:682px;top:168px;overflow:visible" width="26" height="25" viewBox="0 0 26 25"><g filter="url(#halo)"><circle cx="10" cy="10" r="8" fill="none" stroke="#3b5570" stroke-width="1.9"/><path d="M16 16l8 8" stroke="#3b5570" stroke-width="3.2"/></g></svg>
<svg class="a" style="left:718px;top:167px;overflow:visible" width="26" height="26" viewBox="0 0 26 26"><g filter="url(#halo)"><path d="M13 2v22M2 13h22" stroke="#3b5570" stroke-width="1.8"/><path d="M13 1l-3.5 4h7zM13 25l-3.5-4h7zM1 13l4-3.5v7zM25 13l-4-3.5v7z" fill="#3b5570"/></g></svg>
<svg class="a" style="left:756px;top:168px;overflow:visible" width="25" height="24" viewBox="0 0 25 24"><g filter="url(#halo)"><path d="M4 7A10 10 0 1 1 2.5 13" fill="none" stroke="#3b5570" stroke-width="1.9"/><path d="M1 2.5l0.5 7 6.5-2z" fill="#3b5570"/></g></svg>
<svg class="a" style="left:792px;top:168px;overflow:visible" width="27" height="24" viewBox="0 0 27 24"><g filter="url(#halo)" stroke="#3b5570" stroke-width="1.5" fill="none"><path d="M2 2l6 6M2 2v5M2 2h5M25 2l-6 6M25 2v5M25 2h-5M2 22l6-6M2 22v-5M2 22h5M25 22l-6-6M25 22v-5M25 22h-5"/></g></svg>
<svg class="a" style="left:826px;top:164px;overflow:visible" width="32" height="32" viewBox="0 0 32 32"><rect width="32" height="32" fill="#e6eef5"/><clipPath id="hc"><rect width="32" height="32"/></clipPath><g clip-path="url(#hc)"><path d="M-30 32L2 0" stroke="#3b5570" stroke-width="2.2"/><path d="M-24 32L8 0" stroke="#3b5570" stroke-width="2.2"/><path d="M-18 32L14 0" stroke="#3b5570" stroke-width="2.2"/><path d="M-12 32L20 0" stroke="#3b5570" stroke-width="2.2"/><path d="M-6 32L26 0" stroke="#3b5570" stroke-width="2.2"/><path d="M0 32L32 0" stroke="#3b5570" stroke-width="2.2"/><path d="M6 32L38 0" stroke="#3b5570" stroke-width="2.2"/><path d="M12 32L44 0" stroke="#3b5570" stroke-width="2.2"/><path d="M18 32L50 0" stroke="#3b5570" stroke-width="2.2"/><path d="M24 32L56 0" stroke="#3b5570" stroke-width="2.2"/><path d="M30 32L62 0" stroke="#3b5570" stroke-width="2.2"/></g></svg>
<svg class="a" style="left:864px;top:164px;overflow:visible" width="31" height="31" viewBox="0 0 31 31"><circle cx="15.5" cy="15.5" r="15" fill="#c6daea" fill-opacity="0.85"/><rect x="8" y="8" width="15" height="15" fill="#7a6a82"/></svg>
<svg class="a" style="left:905px;top:168px;overflow:visible" width="23" height="23" viewBox="0 0 23 23"><rect x="0.5" y="0.5" width="22" height="22" fill="#4a66cc" stroke="#2a3a8a"/><rect x="2" y="2" width="19" height="19" fill="#5270d8"/></svg>
<svg class="a" style="left:937px;top:164px;overflow:visible" width="32" height="32" viewBox="0 0 32 32"><g filter="url(#halo)"><circle cx="16" cy="16" r="11.5" fill="none" stroke="#3b5570" stroke-width="2.4"/><circle cx="16" cy="16" r="4.6" fill="#3b5570"/><path d="M16 1v6M16 25v6M1 16h6M25 16h6" stroke="#3b5570" stroke-width="2.4"/></g></svg>
<svg class="a" style="left:975px;top:166px;overflow:visible" width="27" height="26" viewBox="0 0 27 26"><path d="M1 7h18v18H1z" fill="#a8c8e8" fill-opacity="0.4" stroke="#3a4aa0" stroke-width="1.4"/><path d="M1 7l6-6h18L19 7M25 1v18l-6 6" fill="none" stroke="#3a4aa0" stroke-width="1.4"/><path d="M19 7l6-6v18l-6 6z" fill="#e8e08a" stroke="#3a4aa0" stroke-width="1.2"/><path d="M7 1v18h18M1 25l6-6" fill="none" stroke="#6a7ab0" stroke-width="0.8"/><path d="M22 9v10M20 14h4" stroke="#222" stroke-width="1"/></svg>
<svg class="a" style="left:1014px;top:167px;overflow:visible" width="25" height="25" viewBox="0 0 25 25"><path d="M2 24V8l8-7v17z" fill="#a8c8ec" fill-opacity="0.6" stroke="#45607a" stroke-width="1.3"/><path d="M2 24l8-6h14" fill="none" stroke="#45607a" stroke-width="1.3"/><path d="M4 22l12-1 6-3H10z" fill="#a8c8ec" fill-opacity="0.7"/><path d="M16 18v5M13 20.5h6" stroke="#2a3ab0" stroke-width="1.3"/></svg>
<svg class="a" style="left:1051px;top:167px;overflow:visible" width="25" height="25" viewBox="0 0 25 25"><path d="M2 24V8l8-7v17z" fill="#a8c8ec" fill-opacity="0.6" stroke="#45607a" stroke-width="1.3"/><path d="M2 24l8-6h14" fill="none" stroke="#45607a" stroke-width="1.3"/><path d="M4 22l12-1 6-3H10z" fill="#a8c8ec" fill-opacity="0.7"/><path d="M16 17v5M13 19.5h6" stroke="#2a3ab0" stroke-width="1.3"/><path d="M12 23l3-3 3 3z" fill="#e8e08a"/></svg>
<svg class="a" style="left:1089px;top:167px;overflow:visible" width="25" height="25" viewBox="0 0 25 25"><path d="M2 24V8l8-7v17z" fill="#a8c8ec" fill-opacity="0.6" stroke="#45607a" stroke-width="1.3"/><path d="M2 24l8-6h14" fill="none" stroke="#45607a" stroke-width="1.3"/><path d="M4 22l12-1 6-3H10z" fill="#a8c8ec" fill-opacity="0.7"/><path d="M21 13v8M17 17h8" stroke="#2a3ab0" stroke-width="1.4"/></svg>
<svg class="a" style="left:1124px;top:166px;overflow:visible" width="26" height="26" viewBox="0 0 26 26"><path d="M6 4A11 11 0 1 1 5 22" fill="none" stroke="#666e78" stroke-width="2.4"/><circle cx="12.5" cy="12.5" r="3" fill="#d85a5a"/></svg>
<svg class="a" style="left:1160px;top:164px;overflow:visible" width="31" height="31" viewBox="0 0 31 31"><circle cx="15.5" cy="15.5" r="15" fill="#c6daea" fill-opacity="0.85"/><rect x="7.5" y="9" width="15.5" height="15" fill="#3aaa7a"/></svg>
<svg class="a" style="left:1195px;top:173px;overflow:visible" width="34" height="14" viewBox="0 0 34 14"><path d="M1 7h32" stroke="#2a3a4a" stroke-width="1.6"/><path d="M1 7l3-3 3 3-3 3zM13 7l4-4 4 4-4 4zM26 7l3-3 3 3-3 3z" fill="#2a3a4a"/><path d="M14.5 7l2.5-2.5 2.5 2.5-2.5 2.5z" fill="#9aa"/></svg>
<svg class="a" style="left:1235px;top:166px;overflow:visible" width="26" height="27" viewBox="0 0 26 27"><path d="M1 7h18v18H1z" fill="#a8c8e8" fill-opacity="0.4" stroke="#3a4aa0" stroke-width="1.4"/><path d="M1 7l6-6h18L19 7M25 1v18l-6 6" fill="none" stroke="#3a4aa0" stroke-width="1.4"/><path d="M19 7l6-6v18l-6 6z" fill="#e8e08a" stroke="#3a4aa0" stroke-width="1.2"/><g fill="#e8a0c0" stroke="#3a4aa0" stroke-width="0.8"><path d="M17 4l2-2 2 2-2 2zM21 13l2-2 2 2-2 2zM17 23l2-2 2 2-2 2zM22 19l2-2 2 2-2 2z"/></g></svg>
<svg class="a" style="left:1271px;top:166px;overflow:visible" width="31" height="26" viewBox="0 0 31 26"><ellipse cx="15.5" cy="17" rx="14" ry="8" fill="none" stroke="#3aa04a" stroke-width="1.2"/><path d="M15.5 17V2M15.5 17l9-7M15.5 17l-8-2" stroke="#3a4ab0" stroke-width="1.2"/><path d="M15.5 17l9-7" stroke="#d04a4a" stroke-width="1.2"/><g fill="#e8a0c0" stroke="#3a4aa0" stroke-width="0.8"><path d="M2 11l2.5-2.5 2.5 2.5-2.5 2.5zM25 5l2.5-2.5 2.5 2.5-2.5 2.5zM26 15l2.5-2.5 2.5 2.5-2.5 2.5z"/></g><path d="M13.5 4l2-3 2 3z" fill="#3a4ab0"/></svg>
<svg class="a" style="left:1307px;top:164px;overflow:visible" width="32" height="32" viewBox="0 0 32 32"><rect x="0.5" y="0.5" width="31" height="31" fill="#8ab0dc" fill-opacity="0.5" stroke="#7a8ad0" stroke-width="0.8"/><path d="M2 25V4l21 21z" fill="#3a5a8a" fill-opacity="0.85"/><path d="M6 21v-9l9 9z" fill="#8ab0dc"/><rect x="1" y="25" width="30" height="6" fill="#3a5a8a"/><path d="M4 25v3M8 25v2M12 25v3M16 25v2M20 25v3M24 25v2M28 25v3" stroke="#cde" stroke-width="0.8"/><path d="M15 20L29 3" stroke="#3a5a8a" stroke-width="3"/><path d="M15 20L29 3" stroke="#c8d8e8" stroke-width="1" stroke-dasharray="1.5 1.5"/></svg>
<svg class="a" style="left:1490px;top:180px;overflow:visible" width="120" height="90" viewBox="0 0 120 90"><ellipse cx="59.5" cy="59.5" rx="38" ry="14.5" fill="none" stroke="#5a82a8" stroke-opacity="0.55" stroke-width="8"/><path d="M31 20.7L51.7 14.7 85 17.7 67.7 25.9z" fill="#3f566c" stroke="#dce6ee" stroke-width="0.9"/><path d="M31 20.7L67.7 25.9 67.2 67.7 33.2 57.3z" fill="#435a70" stroke="#dce6ee" stroke-width="0.9"/><path d="M67.7 25.9L85 17.7 84 51.7 67.2 67.7z" fill="#3c5166" stroke="#dce6ee" stroke-width="0.9"/><path d="M51.7 14.7V48M51.7 48L33.2 57.3M51.7 48L84 51.7" stroke="#8a7a6a" stroke-width="0.6" fill="none"/><text x="0" y="0" fill="#f0f4f8" font-size="11" font-family='Liberation Sans' transform="matrix(0.95 0.14 0 1 37 46)">FRONT</text><text x="0" y="0" fill="#f0f4f8" font-size="8" font-family='Liberation Sans' transform="matrix(1 -0.4 0 1 71 43)">R↑</text><text x="33" y="81" fill="#2f4050" font-size="14" font-family='Liberation Sans' stroke="#e8f0f8" stroke-width="0.6" paint-order="stroke" transform="rotate(-20 38 76)">S</text><text x="88" y="69" fill="#2f4050" font-size="12" font-family='Liberation Sans' stroke="#e8f0f8" stroke-width="0.6" paint-order="stroke" transform="rotate(-15 92 64)">E</text><text x="19" y="49" fill="#2f4050" font-size="8" font-family='Liberation Sans' stroke="#e8f0f8" stroke-width="0.5" paint-order="stroke">W</text></svg>
<div class="a" style="left:1179px;top:531px;width:37px;height:23px;background:#fff;border:1px solid #7a7a7a"></div>
<div class="t " style="left:1183px;top:536px;font-size:13px;color:#000">U</div>
<svg class="a" style="left:1201px;top:540px" width="9" height="6" viewBox="0 0 9 6"><path d="M1 1l3.5 3.5L8 1" fill="none" stroke="#222" stroke-width="1.1"/></svg>
<div class="a" style="left:1229px;top:531px;width:38px;height:23px;background:#fff;border:1px solid #7a7a7a"></div>
<div class="t " style="left:1233px;top:536px;font-size:13px;color:#000">0</div>
<div class="a" style="left:1289px;top:531px;width:14px;height:15px;background:#7a7a7a"></div>
<div class="t " style="left:1291px;top:532px;font-size:13px;color:#1a1a1a">Z</div>
<div class="a" style="left:1309px;top:531px;width:64px;height:23px;background:#fff;border:1px solid #7a7a7a"></div>
<div class="t " style="left:1313px;top:536px;font-size:13px;color:#000">法线</div>
<svg class="a" style="left:1358px;top:540px" width="9" height="6" viewBox="0 0 9 6"><path d="M1 1l3.5 3.5L8 1" fill="none" stroke="#222" stroke-width="1.1"/></svg>
<div class="a" style="left:1374px;top:531px;width:15px;height:15px;background:#7a7a7a"></div>
<div class="t " style="left:1376px;top:532px;font-size:13px;color:#1a1a1a">X</div>
<div class="a" style="left:1394px;top:531px;width:80px;height:23px;background:#fff;border:1px solid #7a7a7a"></div>
<div class="t " style="left:1398px;top:536px;font-size:12px;color:#000">Edge 切线</div>
<svg class="a" style="left:1459px;top:540px" width="9" height="6" viewBox="0 0 9 6"><path d="M1 1l3.5 3.5L8 1" fill="none" stroke="#222" stroke-width="1.1"/></svg>
<div class="a" style="left:1494px;top:531px;width:28px;height:15px;background:#7a7a7a"></div>
<div class="t " style="left:1496px;top:533px;font-size:12px;color:#1a1a1a">Tag</div>
<div class="a" style="left:1529px;top:531px;width:58px;height:23px;background:#fff;border:1px solid #7a7a7a"></div>
<div class="t " style="left:1533px;top:536px;font-size:13px;color:#000">Line</div>
<svg class="a" style="left:1572px;top:540px" width="9" height="6" viewBox="0 0 9 6"><path d="M1 1l3.5 3.5L8 1" fill="none" stroke="#222" stroke-width="1.1"/></svg>
<div class="t w" style="left:310px;top:571px;font-size:15px;font-weight:bold">信息</div>
<svg class="a" style="left:1593px;top:575px" width="7" height="9" viewBox="0 0 7 9"><path d="M5.5 1L2 4.5 5.5 8" fill="none" stroke="#fff" stroke-width="2"/></svg>
<div class="a" style="left:1409px;top:949px;width:48px;height:40px;background:radial-gradient(ellipse at 50% 100%,#9a9a9a,#5a5a5a 60%,#4e4e4e);border:1px solid #3a3a3a"></div>
<svg class="a" style="left:1416px;top:953px" width="34" height="32" viewBox="0 0 34 32"><circle cx="17" cy="17" r="13" fill="#4a9ae0"/><circle cx="17" cy="17" r="9.5" fill="#f2f4f8"/><path d="M17 17l-5 5" stroke="#222" stroke-width="1.4"/><path d="M17 17h9" stroke="#e03030" stroke-width="1.2"/><path d="M3 10l7-7v4h5v6h-5v4z" fill="#4a9ae0"/></svg>
<svg class="a" style="left:1468px;top:956px" width="30" height="26" viewBox="0 0 30 26"><path d="M1 20c5-2 6-8 11-12s9-6 15-6c-4 3-5 8-9 13s-10 8-15 7z" fill="#e8c050" stroke="#c89a30" stroke-width="0.8"/><path d="M6 18c4-3 6-8 10-11M9 19c4-3 6-8 10-11M12 20c4-3 6-8 10-11" stroke="#fff2c0" stroke-width="0.8" fill="none"/></svg>
<svg class="a" style="left:1515px;top:954px" width="40" height="30" viewBox="0 0 40 30"><g fill="#f2f2f2" stroke="#aaa" stroke-width="0.6"><rect x="8" y="1" width="4" height="10"/><rect x="1" y="15" width="4" height="10"/><rect x="15" y="15" width="4" height="10"/><rect x="29" y="15" width="4" height="10"/></g><g fill="#2a3ac8"><rect x="9.5" y="3" width="1.5" height="7"/><rect x="2.5" y="17" width="1.5" height="7"/><rect x="16.5" y="17" width="1.5" height="7"/><rect x="30.5" y="17" width="1.5" height="7"/></g><path d="M5 14c0-3 2-3 5-3s5 0 5 3M19 25c0 2 2 3 5 3s5-1 5-3M19 15c0-3 2-3 5-3s5 0 5 3" fill="none" stroke="#777" stroke-width="0.7"/><path d="M13 5h3M6 20h2M20 20h2M34 20h2" stroke="#ccc"/></svg>
<svg class="a" style="left:1581px;top:966px" width="8" height="5"><path d="M0 0H8L4.0 5z" fill="#e8e8e8"/></svg>
<div class="t w" style="left:1626px;top:140px;font-size:15px;font-weight:bold">关节</div>
<svg class="a" style="left:1900px;top:145px" width="7" height="9" viewBox="0 0 7 9"><path d="M5.5 1L2 4.5 5.5 8" fill="none" stroke="#fff" stroke-width="2"/></svg>
<div class="a" style="left:1617px;top:166px;width:303px;height:20px;background:#7e7e7e;border-top:1px solid #6a6a6a;border-bottom:1px solid #747474"></div>
<div class="t " style="left:1628px;top:169px;font-size:14px;color:#f4f4f4">关节信息</div>
<div class="a" style="left:1617px;top:186px;width:303px;height:87px;background:#878787;border-left:1px solid #7a7a7a;border-bottom:2px solid #727272"></div>
<div class="t " style="left:1621px;top:200px;font-size:14px;color:#111">父关节</div>
<div class="t " style="left:1621px;top:223px;font-size:14px;color:#111">关节名</div>
<div class="a" style="left:1705px;top:197px;width:215px;height:21px;background:#fff;border-top:1px solid #9a9a9a"></div>
<div class="t ss" style="left:1707px;top:199px;font-size:13px;color:#000">New_Machine</div>
<div class="a" style="left:1705px;top:219px;width:215px;height:21px;background:#fff"></div>
<div class="a" style="left:1842px;top:242px;width:80px;height:21px;background:linear-gradient(#a8a8a8,#8e8e8e);border:1px solid #6e6e6e;border-radius:2px"></div>
<div class="t " style="left:1868px;top:245px;font-size:14px;color:#222">更新</div>
<div class="a" style="left:1617px;top:273px;width:303px;height:20px;background:#7e7e7e;border-top:1px solid #6a6a6a;border-bottom:1px solid #747474"></div>
<div class="t " style="left:1628px;top:276px;font-size:14px;color:#f4f4f4">轴</div>
<div class="a" style="left:1617px;top:293px;width:303px;height:316px;background:#878787;border-left:1px solid #7a7a7a;border-bottom:2px solid #727272"></div>
<div class="t " style="left:1631px;top:310px;font-size:14px;color:#111">类型</div>
<div class="a" style="left:1669px;top:306px;width:149px;height:21px;background:#fff;border:1px solid #7a7a7a"></div>
<div class="a" style="left:1803px;top:307px;width:14px;height:19px;background:linear-gradient(#a0a0a0,#8a8a8a);border-left:1px solid #777"></div>
<svg class="a" style="left:1806px;top:315px" width="8" height="5"><path d="M0 0H8L4.0 5z" fill="#eee"/></svg>
<div class="t ss" style="left:1673px;top:309px;font-size:13px;color:#000">simple_fixed</div>
<div class="a" style="left:1825px;top:305px;width:97px;height:22px;background:linear-gradient(#a8a8a8,#8e8e8e);border:1px solid #6e6e6e;border-radius:2px"></div>
<div class="t " style="left:1852px;top:309px;font-size:14px;color:#222">指南针</div>
<div class="t " style="left:1631px;top:349px;font-size:14px;color:#111">地址</div>
<div class="a" style="left:1690px;top:345px;width:66px;height:20px;background:#fff;border:1px solid #7a7a7a"></div>
<div class="a" style="left:1741px;top:346px;width:14px;height:18px;background:linear-gradient(#a0a0a0,#8a8a8a)"></div>
<svg class="a" style="left:1744px;top:353px" width="8" height="5"><path d="M0 0H8L4.0 5z" fill="#eee"/></svg>
<div class="t " style="left:1631px;top:371px;font-size:14px;color:#111">附着</div>
<div class="a" style="left:1690px;top:367px;width:66px;height:20px;background:#fff;border:1px solid #7a7a7a"></div>
<div class="a" style="left:1741px;top:368px;width:14px;height:18px;background:linear-gradient(#a0a0a0,#8a8a8a)"></div>
<svg class="a" style="left:1744px;top:375px" width="8" height="5"><path d="M0 0H8L4.0 5z" fill="#eee"/></svg>
<div class="t ss" style="left:1693px;top:371px;font-size:12px;color:#333">NO</div>
<div class="t " style="left:1631px;top:392px;font-size:14px;color:#111">上限</div>
<div class="a" style="left:1690px;top:388px;width:66px;height:21px;background:#fff"></div>
<div class="t " style="left:1692px;top:391px;font-size:13px;color:#000">180</div>
<div class="t " style="left:1631px;top:414px;font-size:14px;color:#111">下限</div>
<div class="a" style="left:1690px;top:410px;width:66px;height:21px;background:#fff"></div>
<div class="t " style="left:1692px;top:413px;font-size:13px;color:#000">-180</div>
<div class="t " style="left:1631px;top:436px;font-size:14px;color:#111">数值</div>
<div class="a" style="left:1690px;top:432px;width:66px;height:21px;background:#fff"></div>
<div class="t " style="left:1692px;top:435px;font-size:13px;color:#000">0</div>
<div class="t " style="left:1631px;top:458px;font-size:14px;color:#111">速度</div>
<div class="a" style="left:1690px;top:454px;width:66px;height:21px;background:#fff"></div>
<div class="t " style="left:1692px;top:457px;font-size:13px;color:#000">100</div>
<div class="t " style="left:1631px;top:480px;font-size:14px;color:#111">加速度</div>
<div class="a" style="left:1690px;top:476px;width:66px;height:21px;background:#fff"></div>
<div class="t " style="left:1692px;top:479px;font-size:13px;color:#000">1000</div>
<div class="t " style="left:1631px;top:502px;font-size:14px;color:#111">加加速度</div>
<div class="a" style="left:1690px;top:498px;width:66px;height:21px;background:#fff"></div>
<div class="t " style="left:1692px;top:501px;font-size:13px;color:#000">3000</div>
<div class="t ss" style="left:1846px;top:349px;font-size:12px;color:#111">X</div>
<div class="a" style="left:1863px;top:345px;width:57px;height:21px;background:#fff"></div>
<div class="t " style="left:1865px;top:348px;font-size:13px;color:#000">0</div>
<div class="t ss" style="left:1846px;top:371px;font-size:12px;color:#111">Y</div>
<div class="a" style="left:1863px;top:367px;width:57px;height:21px;background:#fff"></div>
<div class="t " style="left:1865px;top:370px;font-size:13px;color:#000">0</div>
<div class="t ss" style="left:1846px;top:393px;font-size:12px;color:#111">Z</div>
<div class="a" style="left:1863px;top:389px;width:57px;height:21px;background:#fff"></div>
<div class="t " style="left:1865px;top:392px;font-size:13px;color:#000">0</div>
<div class="t " style="left:1776px;top:416px;font-size:14px;color:#111">轴向量</div>
<div class="a" style="left:1863px;top:412px;width:57px;height:20px;background:#fff;border:1px solid #7a7a7a"></div>
<div class="a" style="left:1912px;top:413px;width:8px;height:18px;background:linear-gradient(#a0a0a0,#8a8a8a)"></div>
<div class="t ss" style="left:1866px;top:415px;font-size:12px;color:#333">Z</div>
<div class="t ss" style="left:1842px;top:442px;font-size:12px;color:#111">vx</div>
<div class="a" style="left:1863px;top:434px;width:57px;height:21px;background:#fff"></div>
<div class="t " style="left:1865px;top:437px;font-size:13px;color:#000">0</div>
<div class="t ss" style="left:1842px;top:464px;font-size:12px;color:#111">vy</div>
<div class="a" style="left:1863px;top:456px;width:57px;height:21px;background:#fff"></div>
<div class="t " style="left:1865px;top:459px;font-size:13px;color:#000">0</div>
<div class="t ss" style="left:1842px;top:486px;font-size:12px;color:#111">vz</div>
<div class="a" style="left:1863px;top:478px;width:57px;height:21px;background:#fff"></div>
<div class="t " style="left:1865px;top:481px;font-size:13px;color:#000">1</div>
<div class="t ss" style="left:1842px;top:508px;font-size:12px;color:#111">va</div>
<div class="a" style="left:1863px;top:500px;width:57px;height:21px;background:#fff"></div>
<div class="t " style="left:1865px;top:503px;font-size:13px;color:#000">0</div>
<div class="t ss" style="left:1789px;top:462px;font-size:12px;color:#111">I</div>
<div class="a" style="left:1803px;top:454px;width:29px;height:21px;background:#fff"></div>
<div class="t " style="left:1805px;top:457px;font-size:13px;color:#000">0</div>
<div class="t ss" style="left:1789px;top:484px;font-size:12px;color:#111">J</div>
<div class="a" style="left:1803px;top:476px;width:29px;height:21px;background:#fff"></div>
<div class="t " style="left:1805px;top:479px;font-size:13px;color:#000">0</div>
<div class="t ss" style="left:1789px;top:506px;font-size:12px;color:#111">K</div>
<div class="a" style="left:1803px;top:498px;width:29px;height:21px;background:#fff"></div>
<div class="t " style="left:1805px;top:501px;font-size:13px;color:#000">1</div>
<div class="t " style="left:1631px;top:529px;font-size:14px;color:#111">方向</div>
<div class="a" style="left:1685px;top:527px;width:226px;height:20px;background:#fff;border:1px solid #7a7a7a"></div>
<div class="a" style="left:1911px;top:528px;width:9px;height:18px;background:linear-gradient(#a0a0a0,#8a8a8a)"></div>
<div class="t " style="left:1688px;top:529px;font-size:14px;color:#111">相同——与标准系统轴方向</div>
<div class="a" style="left:1630px;top:558px;width:12px;height:12px;background:linear-gradient(#dcdcdc,#f4f4f4);border:1px solid #9a9a9a"></div>
<div class="t " style="left:1646px;top:557px;font-size:14px;color:#111">仿真轴</div>
<div class="a" style="left:1630px;top:583px;width:12px;height:12px;background:linear-gradient(#dcdcdc,#f4f4f4);border:1px solid #9a9a9a"></div>
<div class="t " style="left:1646px;top:582px;font-size:14px;color:#111">关联模拟量输入</div>
<div class="a" style="left:1787px;top:583px;width:12px;height:12px;background:linear-gradient(#dcdcdc,#f4f4f4);border:1px solid #9a9a9a"></div>
<div class="t " style="left:1803px;top:582px;font-size:14px;color:#111">关联模拟量输出</div>
<div class="a" style="left:1617px;top:609px;width:303px;height:21px;background:#7e7e7e;border-top:1px solid #6a6a6a;border-bottom:1px solid #747474"></div>
<div class="t " style="left:1628px;top:612px;font-size:14px;color:#f4f4f4">模型</div>
<div class="a" style="left:1617px;top:630px;width:303px;height:78px;background:#878787;border-left:1px solid #7a7a7a;border-bottom:2px solid #727272"></div>
<div class="a" style="left:1716px;top:637px;width:12px;height:12px;background:linear-gradient(#dcdcdc,#f4f4f4);border:1px solid #9a9a9a"></div>
<svg class="a" style="left:1716px;top:637px" width="12" height="12"><path d="M2.5 6l2.5 3 4.5-6" fill="none" stroke="#333" stroke-width="1.6"/></svg>
<div class="t " style="left:1733px;top:636px;font-size:14px;color:#111">模型颜色</div>
<div class="a" style="left:1845px;top:634px;width:36px;height:21px;background:linear-gradient(#a8a8a8,#8e8e8e);border:1px solid #6e6e6e;border-radius:2px"></div>
<div class="t " style="left:1851px;top:638px;font-size:12px;color:#222">+...</div>
<div class="a" style="left:1893px;top:634px;width:30px;height:21px;background:linear-gradient(#a8a8a8,#8e8e8e);border:1px solid #6e6e6e;border-radius:2px"></div>
<div class="t " style="left:1899px;top:638px;font-size:12px;color:#222">-..</div>
<div class="a" style="left:1893px;top:660px;width:30px;height:44px;background:linear-gradient(#a8a8a8,#8e8e8e);border:1px solid #6e6e6e;border-radius:2px"></div>
<div class="t " style="left:1894px;top:675px;font-size:14px;color:#222">设置</div>
<div class="t ss" style="left:1633px;top:663px;font-size:12px;color:#111">X</div>
<div class="t ss" style="left:1714px;top:663px;font-size:12px;color:#111">Y</div>
<div class="t ss" style="left:1803px;top:663px;font-size:12px;color:#111">Z</div>
<div class="t ss" style="left:1633px;top:687px;font-size:12px;color:#111">A</div>
<div class="t ss" style="left:1714px;top:687px;font-size:12px;color:#111">B</div>
<div class="t ss" style="left:1803px;top:687px;font-size:12px;color:#111">C</div>
<div class="a" style="left:1644px;top:659px;width:66px;height:21px;background:#fff"></div>
<div class="t " style="left:1646px;top:662px;font-size:13px;color:#000">0</div>
<div class="a" style="left:1644px;top:683px;width:66px;height:21px;background:#fff"></div>
<div class="t " style="left:1646px;top:686px;font-size:13px;color:#000">0</div>
<div class="a" style="left:1725px;top:659px;width:66px;height:21px;background:#fff"></div>
<div class="t " style="left:1727px;top:662px;font-size:13px;color:#000">0</div>
<div class="a" style="left:1725px;top:683px;width:66px;height:21px;background:#fff"></div>
<div class="t " style="left:1727px;top:686px;font-size:13px;color:#000">0</div>
<div class="a" style="left:1814px;top:659px;width:66px;height:21px;background:#fff"></div>
<div class="t " style="left:1816px;top:662px;font-size:13px;color:#000">0</div>
<div class="a" style="left:1814px;top:683px;width:66px;height:21px;background:#fff"></div>
<div class="t " style="left:1816px;top:686px;font-size:13px;color:#000">0</div>
<div class="a" style="left:1618px;top:715px;width:299px;height:224px;background:#fff;border:1px solid #555;border-bottom:3px solid #4a4a4a"></div>
<div class="a" style="left:1619px;top:716px;width:297px;height:21px;background:linear-gradient(#8a8a8a,#7a7a7a);border-bottom:1px solid #555"></div>
<div class="a" style="left:1633px;top:716px;width:1px;height:21px;background:#555"></div>
<div class="a" style="left:1831px;top:716px;width:1px;height:21px;background:#555"></div>
<div class="a" style="left:1868px;top:716px;width:1px;height:21px;background:#555"></div>
<div class="t ss" style="left:1638px;top:719px;font-size:13px;color:#f2f2f2">File</div>
<div class="t ss" style="left:1835px;top:719px;font-size:13px;color:#f2f2f2">C...</div>
<div class="t ss" style="left:1873px;top:719px;font-size:13px;color:#f2f2f2">Alpha</div>
<div class="a" style="left:1616px;top:937px;width:304px;height:3px;background:#878787"></div>
<div class="a" style="left:1616px;top:940px;width:304px;height:6px;background:linear-gradient(#474747 0,#474747 2px,#6a6a6a 2px,#646464 4px,#474747 4px)"></div>
<div class="a" style="left:1616px;top:946px;width:304px;height:47px;background:#878787"></div>
<svg class="a" style="left:1707px;top:956px" width="30" height="28" viewBox="0 0 30 28"><rect x="1" y="2" width="26" height="19" rx="2" fill="#eef2fb" stroke="#b8c4dc"/><circle cx="8" cy="9" r="3" fill="#4a5a80"/><path d="M3 17c1-4 9-4 10 0z" fill="#4a5a80"/><path d="M15 7h8M15 10h8M15 13h6" stroke="#8aa0c8"/><path d="M12 26l2-6 12-12 3 3-12 12z" fill="#f0b030" stroke="#8a5a10" stroke-width="0.6"/></svg>
<svg class="a" style="left:1886px;top:966px" width="8" height="5"><path d="M0 0H8L4.0 5z" fill="#e8e8e8"/></svg>
<div class="a" style="left:0px;top:993px;width:1920px;height:21px;background:#efefef"></div>
<div class="a" style="left:0px;top:1014px;width:1920px;height:1px;background:#b8b8f0"></div>
<div class="a" style="left:0px;top:1015px;width:1920px;height:29px;background:linear-gradient(#4a4a4a,#333 80%)"></div>
<div class="a" style="left:0px;top:1039px;width:1920px;height:5px;background:#1e1e1e"></div>
<div class="a" style="left:0px;top:131px;width:1920px;height:3px;background:linear-gradient(rgba(0,0,0,0.18),rgba(0,0,0,0))"></div>
<div class="t " style="left:3px;top:997px;font-size:14px;color:#000">当前目标</div>
<div class="t ss" style="left:59px;top:998px;font-size:13px;color:#000">TagGroup:</div>
<div class="t " style="left:122px;top:997px;font-size:14px;color:#000">无</div>
<div class="t ss" style="left:6px;top:1022px;font-size:13px;color:#e0e0e0">Not Connected</div>
<div class="t ss" style="left:107px;top:1022px;font-size:13px;color:#e0e0e0">Time</div>
<svg class="a" style="left:146px;top:1022px" width="14" height="11" viewBox="0 0 14 11"><ellipse cx="7" cy="5.5" rx="6.5" ry="4.5" fill="#dfe6f0" stroke="#6a84b8"/><circle cx="7" cy="5.5" r="2.8" fill="#4a68b0"/><circle cx="6" cy="4.5" r="1" fill="#fff"/></svg>
<div class="a" style="left:167px;top:1018px;width:73px;height:21px;background:#c6c6c6;border:1px solid #555"></div>
<div class="a" style="left:224px;top:1019px;width:15px;height:19px;background:#9c9c9c;border-left:1px solid #888"></div>
<svg class="a" style="left:228px;top:1026px" width="8" height="5"><path d="M0 0H8L4.0 5z" fill="#444"/></svg>
<div class="t ss" style="left:171px;top:1022px;font-size:13px;color:#222">Front</div>
<div class="a" style="left:252px;top:1021px;width:14px;height:14px;background:#f4f6fa;border:1px solid #aab"></div>
<svg class="a" style="left:253px;top:1022px" width="12" height="12"><path d="M3 3l6 6M9 3l-6 6" stroke="#233a6a" stroke-width="2"/></svg>
<div class="a" style="left:272px;top:1018px;width:74px;height:21px;background:#c6c6c6;border:1px solid #555"></div>
<div class="a" style="left:330px;top:1019px;width:15px;height:19px;background:#9c9c9c;border-left:1px solid #888"></div>
<svg class="a" style="left:334px;top:1026px" width="8" height="5"><path d="M0 0H8L4.0 5z" fill="#444"/></svg>
<div class="t ss" style="left:276px;top:1022px;font-size:13px;color:#222">Shade</div>
<svg class="a" style="left:358px;top:1021px" width="14" height="14" viewBox="0 0 14 14"><path d="M2 7a5 5 0 0 1 9-3M12 7a5 5 0 0 1-9 3" fill="none" stroke="#dde4f0" stroke-width="2"/><path d="M12 1v4H8zM2 13V9h4z" fill="#dde4f0"/></svg>
<div class="a" style="left:379px;top:1018px;width:73px;height:21px;background:#c6c6c6;border:1px solid #555"></div>
<div class="a" style="left:436px;top:1019px;width:15px;height:19px;background:#9c9c9c;border-left:1px solid #888"></div>
<svg class="a" style="left:440px;top:1026px" width="8" height="5"><path d="M0 0H8L4.0 5z" fill="#444"/></svg>
<div class="t ss" style="left:383px;top:1022px;font-size:13px;color:#222">Medium</div>
<div class="a" style="left:464px;top:1021px;width:14px;height:14px;background:#3a5a6a"></div>
<div class="a" style="left:467px;top:1024px;width:8px;height:8px;background:#b8d8f0;border:1px solid #e8f4ff"></div>
<div class="a" style="left:485px;top:1018px;width:93px;height:21px;background:#c6c6c6;border:1px solid #555"></div>
<div class="a" style="left:562px;top:1019px;width:15px;height:19px;background:#9c9c9c;border-left:1px solid #888"></div>
<svg class="a" style="left:566px;top:1026px" width="8" height="5"><path d="M0 0H8L4.0 5z" fill="#444"/></svg>
<div class="t ss" style="left:489px;top:1022px;font-size:13px;color:#222">Origin</div>
<div class="t " style="left:589px;top:1021px;font-size:14px;color:#e6e6e6">网格间距/毫米</div>
<div class="a" style="left:683px;top:1018px;width:78px;height:21px;background:#c6c6c6;border:1px solid #555"></div>
<div class="t " style="left:687px;top:1022px;font-size:13px;color:#333">1000</div>
<div class="t " style="left:772px;top:1021px;font-size:14px;color:#e6e6e6">网格数</div>
<div class="a" style="left:817px;top:1018px;width:78px;height:21px;background:#c6c6c6;border:1px solid #555"></div>
<div class="t " style="left:821px;top:1022px;font-size:13px;color:#333">2</div>
<div class="t " style="left:905px;top:1021px;font-size:14px;color:#e6e6e6">移动单步/毫米</div>
<div class="a" style="left:1000px;top:1018px;width:78px;height:21px;background:#c6c6c6;border:1px solid #555"></div>
<div class="t " style="left:1004px;top:1022px;font-size:13px;color:#333">0</div>
<div class="t " style="left:1089px;top:1021px;font-size:14px;color:#e6e6e6">旋转单步/度</div>
<div class="a" style="left:1169px;top:1018px;width:78px;height:21px;background:#c6c6c6;border:1px solid #555"></div>
<div class="t " style="left:1173px;top:1022px;font-size:13px;color:#333">0</div>
<div class="t ss" style="left:1258px;top:1022px;font-size:13px;color:#e0e0e0">Info</div>
<svg class="a" style="left:1330px;top:1024px" width="64" height="20" viewBox="0 0 64 20"><ellipse cx="32" cy="26" rx="29" ry="26" fill="#2e3fa0"/></svg>
<div class="a" style="left:1718px;top:937px;width:167px;height:90px;background:rgba(255,255,255,0.3)"></div>
<svg class="a" style="left:1730px;top:872px" width="144" height="144" viewBox="0 0 144 144"><rect width="144" height="144" fill="#fff" fill-opacity="0.3"/><path d="M0.00 0.00h3.89v3.89h-3.89zM0.00 3.89h3.89v3.89h-3.89zM0.00 7.78h3.89v3.89h-3.89zM0.00 11.68h3.89v3.89h-3.89zM0.00 15.57h3.89v3.89h-3.89zM0.00 19.46h3.89v3.89h-3.89zM0.00 23.35h3.89v3.89h-3.89zM0.00 31.14h3.89v3.89h-3.89zM0.00 42.81h3.89v3.89h-3.89zM0.00 54.49h3.89v3.89h-3.89zM0.00 70.05h3.89v3.89h-3.89zM0.00 73.95h3.89v3.89h-3.89zM0.00 77.84h3.89v3.89h-3.89zM0.00 89.51h3.89v3.89h-3.89zM0.00 108.97h3.89v3.89h-3.89zM0.00 116.76h3.89v3.89h-3.89zM0.00 120.65h3.89v3.89h-3.89zM0.00 124.54h3.89v3.89h-3.89zM0.00 128.43h3.89v3.89h-3.89zM0.00 132.32h3.89v3.89h-3.89zM0.00 136.22h3.89v3.89h-3.89zM0.00 140.11h3.89v3.89h-3.89zM3.89 0.00h3.89v3.89h-3.89zM3.89 23.35h3.89v3.89h-3.89zM3.89 31.14h3.89v3.89h-3.89zM3.89 38.92h3.89v3.89h-3.89zM3.89 42.81h3.89v3.89h-3.89zM3.89 46.70h3.89v3.89h-3.89zM3.89 50.59h3.89v3.89h-3.89zM3.89 54.49h3.89v3.89h-3.89zM3.89 58.38h3.89v3.89h-3.89zM3.89 73.95h3.89v3.89h-3.89zM3.89 81.73h3.89v3.89h-3.89zM3.89 85.62h3.89v3.89h-3.89zM3.89 105.08h3.89v3.89h-3.89zM3.89 108.97h3.89v3.89h-3.89zM3.89 116.76h3.89v3.89h-3.89zM3.89 140.11h3.89v3.89h-3.89zM7.78 0.00h3.89v3.89h-3.89zM7.78 7.78h3.89v3.89h-3.89zM7.78 11.68h3.89v3.89h-3.89zM7.78 15.57h3.89v3.89h-3.89zM7.78 23.35h3.89v3.89h-3.89zM7.78 31.14h3.89v3.89h-3.89zM7.78 35.03h3.89v3.89h-3.89zM7.78 42.81h3.89v3.89h-3.89zM7.78 50.59h3.89v3.89h-3.89zM7.78 62.27h3.89v3.89h-3.89zM7.78 66.16h3.89v3.89h-3.89zM7.78 73.95h3.89v3.89h-3.89zM7.78 81.73h3.89v3.89h-3.89zM7.78 85.62h3.89v3.89h-3.89zM7.78 97.30h3.89v3.89h-3.89zM7.78 101.19h3.89v3.89h-3.89zM7.78 105.08h3.89v3.89h-3.89zM7.78 116.76h3.89v3.89h-3.89zM7.78 124.54h3.89v3.89h-3.89zM7.78 128.43h3.89v3.89h-3.89zM7.78 132.32h3.89v3.89h-3.89zM7.78 140.11h3.89v3.89h-3.89zM11.68 0.00h3.89v3.89h-3.89zM11.68 7.78h3.89v3.89h-3.89zM11.68 11.68h3.89v3.89h-3.89zM11.68 15.57h3.89v3.89h-3.89zM11.68 23.35h3.89v3.89h-3.89zM11.68 35.03h3.89v3.89h-3.89zM11.68 38.92h3.89v3.89h-3.89zM11.68 42.81h3.89v3.89h-3.89zM11.68 46.70h3.89v3.89h-3.89zM11.68 54.49h3.89v3.89h-3.89zM11.68 62.27h3.89v3.89h-3.89zM11.68 66.16h3.89v3.89h-3.89zM11.68 73.95h3.89v3.89h-3.89zM11.68 81.73h3.89v3.89h-3.89zM11.68 85.62h3.89v3.89h-3.89zM11.68 89.51h3.89v3.89h-3.89zM11.68 93.41h3.89v3.89h-3.89zM11.68 105.08h3.89v3.89h-3.89zM11.68 116.76h3.89v3.89h-3.89zM11.68 124.54h3.89v3.89h-3.89zM11.68 128.43h3.89v3.89h-3.89zM11.68 132.32h3.89v3.89h-3.89zM11.68 140.11h3.89v3.89h-3.89zM15.57 0.00h3.89v3.89h-3.89zM15.57 7.78h3.89v3.89h-3.89zM15.57 11.68h3.89v3.89h-3.89zM15.57 15.57h3.89v3.89h-3.89zM15.57 23.35h3.89v3.89h-3.89zM15.57 31.14h3.89v3.89h-3.89zM15.57 35.03h3.89v3.89h-3.89zM15.57 46.70h3.89v3.89h-3.89zM15.57 54.49h3.89v3.89h-3.89zM15.57 58.38h3.89v3.89h-3.89zM15.57 66.16h3.89v3.89h-3.89zM15.57 70.05h3.89v3.89h-3.89zM15.57 73.95h3.89v3.89h-3.89zM15.57 77.84h3.89v3.89h-3.89zM15.57 85.62h3.89v3.89h-3.89zM15.57 93.41h3.89v3.89h-3.89zM15.57 97.30h3.89v3.89h-3.89zM15.57 105.08h3.89v3.89h-3.89zM15.57 116.76h3.89v3.89h-3.89zM15.57 124.54h3.89v3.89h-3.89zM15.57 128.43h3.89v3.89h-3.89zM15.57 132.32h3.89v3.89h-3.89zM15.57 140.11h3.89v3.89h-3.89zM19.46 0.00h3.89v3.89h-3.89zM19.46 23.35h3.89v3.89h-3.89zM19.46 35.03h3.89v3.89h-3.89zM19.46 38.92h3.89v3.89h-3.89zM19.46 50.59h3.89v3.89h-3.89zM19.46 54.49h3.89v3.89h-3.89zM19.46 66.16h3.89v3.89h-3.89zM19.46 81.73h3.89v3.89h-3.89zM19.46 85.62h3.89v3.89h-3.89zM19.46 89.51h3.89v3.89h-3.89zM19.46 97.30h3.89v3.89h-3.89zM19.46 105.08h3.89v3.89h-3.89zM19.46 116.76h3.89v3.89h-3.89zM19.46 140.11h3.89v3.89h-3.89zM23.35 0.00h3.89v3.89h-3.89zM23.35 3.89h3.89v3.89h-3.89zM23.35 7.78h3.89v3.89h-3.89zM23.35 11.68h3.89v3.89h-3.89zM23.35 15.57h3.89v3.89h-3.89zM23.35 19.46h3.89v3.89h-3.89zM23.35 23.35h3.89v3.89h-3.89zM23.35 31.14h3.89v3.89h-3.89zM23.35 38.92h3.89v3.89h-3.89zM23.35 46.70h3.89v3.89h-3.89zM23.35 54.49h3.89v3.89h-3.89zM23.35 62.27h3.89v3.89h-3.89zM23.35 70.05h3.89v3.89h-3.89zM23.35 77.84h3.89v3.89h-3.89zM23.35 85.62h3.89v3.89h-3.89zM23.35 93.41h3.89v3.89h-3.89zM23.35 101.19h3.89v3.89h-3.89zM23.35 108.97h3.89v3.89h-3.89zM23.35 116.76h3.89v3.89h-3.89zM23.35 120.65h3.89v3.89h-3.89zM23.35 124.54h3.89v3.89h-3.89zM23.35 128.43h3.89v3.89h-3.89zM23.35 132.32h3.89v3.89h-3.89zM23.35 136.22h3.89v3.89h-3.89zM23.35 140.11h3.89v3.89h-3.89zM27.24 35.03h3.89v3.89h-3.89zM27.24 38.92h3.89v3.89h-3.89zM27.24 46.70h3.89v3.89h-3.89zM27.24 50.59h3.89v3.89h-3.89zM27.24 66.16h3.89v3.89h-3.89zM27.24 73.95h3.89v3.89h-3.89zM27.24 77.84h3.89v3.89h-3.89zM27.24 81.73h3.89v3.89h-3.89zM27.24 85.62h3.89v3.89h-3.89zM27.24 89.51h3.89v3.89h-3.89zM27.24 93.41h3.89v3.89h-3.89zM27.24 97.30h3.89v3.89h-3.89zM27.24 105.08h3.89v3.89h-3.89zM27.24 108.97h3.89v3.89h-3.89zM31.14 19.46h3.89v3.89h-3.89zM31.14 23.35h3.89v3.89h-3.89zM31.14 27.24h3.89v3.89h-3.89zM31.14 31.14h3.89v3.89h-3.89zM31.14 46.70h3.89v3.89h-3.89zM31.14 54.49h3.89v3.89h-3.89zM31.14 62.27h3.89v3.89h-3.89zM31.14 70.05h3.89v3.89h-3.89zM31.14 101.19h3.89v3.89h-3.89zM31.14 116.76h3.89v3.89h-3.89zM31.14 136.22h3.89v3.89h-3.89zM35.03 3.89h3.89v3.89h-3.89zM35.03 27.24h3.89v3.89h-3.89zM35.03 38.92h3.89v3.89h-3.89zM35.03 46.70h3.89v3.89h-3.89zM35.03 54.49h3.89v3.89h-3.89zM35.03 62.27h3.89v3.89h-3.89zM35.03 66.16h3.89v3.89h-3.89zM35.03 73.95h3.89v3.89h-3.89zM35.03 85.62h3.89v3.89h-3.89zM35.03 89.51h3.89v3.89h-3.89zM35.03 93.41h3.89v3.89h-3.89zM35.03 101.19h3.89v3.89h-3.89zM35.03 105.08h3.89v3.89h-3.89zM35.03 116.76h3.89v3.89h-3.89zM35.03 124.54h3.89v3.89h-3.89zM35.03 132.32h3.89v3.89h-3.89zM35.03 136.22h3.89v3.89h-3.89zM38.92 7.78h3.89v3.89h-3.89zM38.92 15.57h3.89v3.89h-3.89zM38.92 19.46h3.89v3.89h-3.89zM38.92 23.35h3.89v3.89h-3.89zM38.92 27.24h3.89v3.89h-3.89zM38.92 46.70h3.89v3.89h-3.89zM38.92 50.59h3.89v3.89h-3.89zM38.92 54.49h3.89v3.89h-3.89zM38.92 58.38h3.89v3.89h-3.89zM38.92 62.27h3.89v3.89h-3.89zM38.92 66.16h3.89v3.89h-3.89zM38.92 73.95h3.89v3.89h-3.89zM38.92 77.84h3.89v3.89h-3.89zM38.92 89.51h3.89v3.89h-3.89zM38.92 93.41h3.89v3.89h-3.89zM38.92 97.30h3.89v3.89h-3.89zM38.92 105.08h3.89v3.89h-3.89zM38.92 116.76h3.89v3.89h-3.89zM38.92 124.54h3.89v3.89h-3.89zM38.92 128.43h3.89v3.89h-3.89zM38.92 132.32h3.89v3.89h-3.89zM38.92 136.22h3.89v3.89h-3.89zM42.81 0.00h3.89v3.89h-3.89zM42.81 3.89h3.89v3.89h-3.89zM42.81 7.78h3.89v3.89h-3.89zM42.81 15.57h3.89v3.89h-3.89zM42.81 42.81h3.89v3.89h-3.89zM42.81 46.70h3.89v3.89h-3.89zM42.81 50.59h3.89v3.89h-3.89zM42.81 54.49h3.89v3.89h-3.89zM42.81 58.38h3.89v3.89h-3.89zM42.81 66.16h3.89v3.89h-3.89zM42.81 70.05h3.89v3.89h-3.89zM42.81 73.95h3.89v3.89h-3.89zM42.81 93.41h3.89v3.89h-3.89zM42.81 105.08h3.89v3.89h-3.89zM42.81 116.76h3.89v3.89h-3.89zM42.81 120.65h3.89v3.89h-3.89zM42.81 132.32h3.89v3.89h-3.89zM46.70 7.78h3.89v3.89h-3.89zM46.70 15.57h3.89v3.89h-3.89zM46.70 23.35h3.89v3.89h-3.89zM46.70 38.92h3.89v3.89h-3.89zM46.70 62.27h3.89v3.89h-3.89zM46.70 73.95h3.89v3.89h-3.89zM46.70 77.84h3.89v3.89h-3.89zM46.70 81.73h3.89v3.89h-3.89zM46.70 93.41h3.89v3.89h-3.89zM46.70 97.30h3.89v3.89h-3.89zM46.70 105.08h3.89v3.89h-3.89zM46.70 112.86h3.89v3.89h-3.89zM46.70 116.76h3.89v3.89h-3.89zM46.70 124.54h3.89v3.89h-3.89zM46.70 128.43h3.89v3.89h-3.89zM50.59 7.78h3.89v3.89h-3.89zM50.59 15.57h3.89v3.89h-3.89zM50.59 19.46h3.89v3.89h-3.89zM50.59 31.14h3.89v3.89h-3.89zM50.59 54.49h3.89v3.89h-3.89zM50.59 58.38h3.89v3.89h-3.89zM50.59 70.05h3.89v3.89h-3.89zM50.59 89.51h3.89v3.89h-3.89zM50.59 105.08h3.89v3.89h-3.89zM50.59 116.76h3.89v3.89h-3.89zM50.59 128.43h3.89v3.89h-3.89zM50.59 136.22h3.89v3.89h-3.89zM54.49 0.00h3.89v3.89h-3.89zM54.49 11.68h3.89v3.89h-3.89zM54.49 15.57h3.89v3.89h-3.89zM54.49 19.46h3.89v3.89h-3.89zM54.49 23.35h3.89v3.89h-3.89zM54.49 27.24h3.89v3.89h-3.89zM54.49 38.92h3.89v3.89h-3.89zM54.49 42.81h3.89v3.89h-3.89zM54.49 46.70h3.89v3.89h-3.89zM54.49 58.38h3.89v3.89h-3.89zM54.49 66.16h3.89v3.89h-3.89zM54.49 70.05h3.89v3.89h-3.89zM54.49 73.95h3.89v3.89h-3.89zM54.49 81.73h3.89v3.89h-3.89zM54.49 85.62h3.89v3.89h-3.89zM54.49 93.41h3.89v3.89h-3.89zM54.49 101.19h3.89v3.89h-3.89zM54.49 108.97h3.89v3.89h-3.89zM54.49 112.86h3.89v3.89h-3.89zM54.49 120.65h3.89v3.89h-3.89zM54.49 124.54h3.89v3.89h-3.89zM54.49 128.43h3.89v3.89h-3.89zM54.49 136.22h3.89v3.89h-3.89zM54.49 140.11h3.89v3.89h-3.89zM58.38 27.24h3.89v3.89h-3.89zM58.38 42.81h3.89v3.89h-3.89zM58.38 46.70h3.89v3.89h-3.89zM58.38 54.49h3.89v3.89h-3.89zM58.38 66.16h3.89v3.89h-3.89zM58.38 70.05h3.89v3.89h-3.89zM58.38 77.84h3.89v3.89h-3.89zM58.38 81.73h3.89v3.89h-3.89zM58.38 89.51h3.89v3.89h-3.89zM58.38 97.30h3.89v3.89h-3.89zM58.38 101.19h3.89v3.89h-3.89zM58.38 108.97h3.89v3.89h-3.89zM58.38 112.86h3.89v3.89h-3.89zM58.38 128.43h3.89v3.89h-3.89zM62.27 3.89h3.89v3.89h-3.89zM62.27 7.78h3.89v3.89h-3.89zM62.27 11.68h3.89v3.89h-3.89zM62.27 15.57h3.89v3.89h-3.89zM62.27 23.35h3.89v3.89h-3.89zM62.27 35.03h3.89v3.89h-3.89zM62.27 38.92h3.89v3.89h-3.89zM62.27 42.81h3.89v3.89h-3.89zM62.27 58.38h3.89v3.89h-3.89zM62.27 62.27h3.89v3.89h-3.89zM62.27 70.05h3.89v3.89h-3.89zM62.27 77.84h3.89v3.89h-3.89zM62.27 81.73h3.89v3.89h-3.89zM62.27 89.51h3.89v3.89h-3.89zM62.27 97.30h3.89v3.89h-3.89zM62.27 108.97h3.89v3.89h-3.89zM62.27 112.86h3.89v3.89h-3.89zM62.27 120.65h3.89v3.89h-3.89zM62.27 124.54h3.89v3.89h-3.89zM62.27 128.43h3.89v3.89h-3.89zM62.27 136.22h3.89v3.89h-3.89zM66.16 15.57h3.89v3.89h-3.89zM66.16 38.92h3.89v3.89h-3.89zM66.16 58.38h3.89v3.89h-3.89zM66.16 81.73h3.89v3.89h-3.89zM66.16 89.51h3.89v3.89h-3.89zM66.16 93.41h3.89v3.89h-3.89zM66.16 97.30h3.89v3.89h-3.89zM66.16 101.19h3.89v3.89h-3.89zM66.16 105.08h3.89v3.89h-3.89zM66.16 116.76h3.89v3.89h-3.89zM66.16 128.43h3.89v3.89h-3.89zM70.05 0.00h3.89v3.89h-3.89zM70.05 23.35h3.89v3.89h-3.89zM70.05 27.24h3.89v3.89h-3.89zM70.05 38.92h3.89v3.89h-3.89zM70.05 42.81h3.89v3.89h-3.89zM70.05 46.70h3.89v3.89h-3.89zM70.05 50.59h3.89v3.89h-3.89zM70.05 54.49h3.89v3.89h-3.89zM70.05 58.38h3.89v3.89h-3.89zM70.05 62.27h3.89v3.89h-3.89zM70.05 97.30h3.89v3.89h-3.89zM70.05 108.97h3.89v3.89h-3.89zM70.05 116.76h3.89v3.89h-3.89zM70.05 120.65h3.89v3.89h-3.89zM70.05 124.54h3.89v3.89h-3.89zM70.05 128.43h3.89v3.89h-3.89zM70.05 136.22h3.89v3.89h-3.89zM73.95 0.00h3.89v3.89h-3.89zM73.95 11.68h3.89v3.89h-3.89zM73.95 15.57h3.89v3.89h-3.89zM73.95 31.14h3.89v3.89h-3.89zM73.95 38.92h3.89v3.89h-3.89zM73.95 42.81h3.89v3.89h-3.89zM73.95 46.70h3.89v3.89h-3.89zM73.95 50.59h3.89v3.89h-3.89zM73.95 54.49h3.89v3.89h-3.89zM73.95 62.27h3.89v3.89h-3.89zM73.95 73.95h3.89v3.89h-3.89zM73.95 85.62h3.89v3.89h-3.89zM73.95 93.41h3.89v3.89h-3.89zM73.95 97.30h3.89v3.89h-3.89zM73.95 105.08h3.89v3.89h-3.89zM73.95 120.65h3.89v3.89h-3.89zM73.95 136.22h3.89v3.89h-3.89zM77.84 0.00h3.89v3.89h-3.89zM77.84 3.89h3.89v3.89h-3.89zM77.84 7.78h3.89v3.89h-3.89zM77.84 15.57h3.89v3.89h-3.89zM77.84 19.46h3.89v3.89h-3.89zM77.84 23.35h3.89v3.89h-3.89zM77.84 31.14h3.89v3.89h-3.89zM77.84 35.03h3.89v3.89h-3.89zM77.84 42.81h3.89v3.89h-3.89zM77.84 66.16h3.89v3.89h-3.89zM77.84 70.05h3.89v3.89h-3.89zM77.84 85.62h3.89v3.89h-3.89zM77.84 89.51h3.89v3.89h-3.89zM77.84 112.86h3.89v3.89h-3.89zM77.84 116.76h3.89v3.89h-3.89zM77.84 132.32h3.89v3.89h-3.89zM77.84 136.22h3.89v3.89h-3.89zM77.84 140.11h3.89v3.89h-3.89zM81.73 0.00h3.89v3.89h-3.89zM81.73 7.78h3.89v3.89h-3.89zM81.73 15.57h3.89v3.89h-3.89zM81.73 19.46h3.89v3.89h-3.89zM81.73 38.92h3.89v3.89h-3.89zM81.73 42.81h3.89v3.89h-3.89zM81.73 46.70h3.89v3.89h-3.89zM81.73 50.59h3.89v3.89h-3.89zM81.73 62.27h3.89v3.89h-3.89zM81.73 66.16h3.89v3.89h-3.89zM81.73 81.73h3.89v3.89h-3.89zM81.73 85.62h3.89v3.89h-3.89zM81.73 89.51h3.89v3.89h-3.89zM81.73 97.30h3.89v3.89h-3.89zM81.73 108.97h3.89v3.89h-3.89zM81.73 124.54h3.89v3.89h-3.89zM81.73 128.43h3.89v3.89h-3.89zM81.73 132.32h3.89v3.89h-3.89zM81.73 140.11h3.89v3.89h-3.89zM85.62 0.00h3.89v3.89h-3.89zM85.62 7.78h3.89v3.89h-3.89zM85.62 15.57h3.89v3.89h-3.89zM85.62 23.35h3.89v3.89h-3.89zM85.62 27.24h3.89v3.89h-3.89zM85.62 31.14h3.89v3.89h-3.89zM85.62 38.92h3.89v3.89h-3.89zM85.62 42.81h3.89v3.89h-3.89zM85.62 54.49h3.89v3.89h-3.89zM85.62 58.38h3.89v3.89h-3.89zM85.62 62.27h3.89v3.89h-3.89zM85.62 70.05h3.89v3.89h-3.89zM85.62 73.95h3.89v3.89h-3.89zM85.62 97.30h3.89v3.89h-3.89zM85.62 105.08h3.89v3.89h-3.89zM85.62 108.97h3.89v3.89h-3.89zM85.62 112.86h3.89v3.89h-3.89zM85.62 124.54h3.89v3.89h-3.89zM85.62 128.43h3.89v3.89h-3.89zM85.62 132.32h3.89v3.89h-3.89zM85.62 136.22h3.89v3.89h-3.89zM85.62 140.11h3.89v3.89h-3.89zM89.51 0.00h3.89v3.89h-3.89zM89.51 3.89h3.89v3.89h-3.89zM89.51 31.14h3.89v3.89h-3.89zM89.51 42.81h3.89v3.89h-3.89zM89.51 46.70h3.89v3.89h-3.89zM89.51 73.95h3.89v3.89h-3.89zM89.51 85.62h3.89v3.89h-3.89zM89.51 89.51h3.89v3.89h-3.89zM89.51 101.19h3.89v3.89h-3.89zM89.51 108.97h3.89v3.89h-3.89zM89.51 120.65h3.89v3.89h-3.89zM89.51 124.54h3.89v3.89h-3.89zM89.51 140.11h3.89v3.89h-3.89zM93.41 0.00h3.89v3.89h-3.89zM93.41 11.68h3.89v3.89h-3.89zM93.41 23.35h3.89v3.89h-3.89zM93.41 35.03h3.89v3.89h-3.89zM93.41 81.73h3.89v3.89h-3.89zM93.41 85.62h3.89v3.89h-3.89zM93.41 89.51h3.89v3.89h-3.89zM93.41 101.19h3.89v3.89h-3.89zM93.41 105.08h3.89v3.89h-3.89zM93.41 108.97h3.89v3.89h-3.89zM93.41 112.86h3.89v3.89h-3.89zM93.41 116.76h3.89v3.89h-3.89zM93.41 124.54h3.89v3.89h-3.89zM93.41 128.43h3.89v3.89h-3.89zM93.41 132.32h3.89v3.89h-3.89zM97.30 0.00h3.89v3.89h-3.89zM97.30 3.89h3.89v3.89h-3.89zM97.30 7.78h3.89v3.89h-3.89zM97.30 19.46h3.89v3.89h-3.89zM97.30 27.24h3.89v3.89h-3.89zM97.30 31.14h3.89v3.89h-3.89zM97.30 35.03h3.89v3.89h-3.89zM97.30 38.92h3.89v3.89h-3.89zM97.30 50.59h3.89v3.89h-3.89zM97.30 54.49h3.89v3.89h-3.89zM97.30 58.38h3.89v3.89h-3.89zM97.30 62.27h3.89v3.89h-3.89zM97.30 70.05h3.89v3.89h-3.89zM97.30 81.73h3.89v3.89h-3.89zM97.30 85.62h3.89v3.89h-3.89zM97.30 97.30h3.89v3.89h-3.89zM97.30 108.97h3.89v3.89h-3.89zM97.30 112.86h3.89v3.89h-3.89zM97.30 116.76h3.89v3.89h-3.89zM97.30 128.43h3.89v3.89h-3.89zM97.30 140.11h3.89v3.89h-3.89zM101.19 7.78h3.89v3.89h-3.89zM101.19 11.68h3.89v3.89h-3.89zM101.19 15.57h3.89v3.89h-3.89zM101.19 19.46h3.89v3.89h-3.89zM101.19 23.35h3.89v3.89h-3.89zM101.19 38.92h3.89v3.89h-3.89zM101.19 42.81h3.89v3.89h-3.89zM101.19 46.70h3.89v3.89h-3.89zM101.19 50.59h3.89v3.89h-3.89zM101.19 70.05h3.89v3.89h-3.89zM101.19 77.84h3.89v3.89h-3.89zM101.19 85.62h3.89v3.89h-3.89zM101.19 101.19h3.89v3.89h-3.89zM101.19 105.08h3.89v3.89h-3.89zM101.19 112.86h3.89v3.89h-3.89zM101.19 116.76h3.89v3.89h-3.89zM101.19 120.65h3.89v3.89h-3.89zM101.19 136.22h3.89v3.89h-3.89zM105.08 0.00h3.89v3.89h-3.89zM105.08 7.78h3.89v3.89h-3.89zM105.08 15.57h3.89v3.89h-3.89zM105.08 31.14h3.89v3.89h-3.89zM105.08 38.92h3.89v3.89h-3.89zM105.08 42.81h3.89v3.89h-3.89zM105.08 46.70h3.89v3.89h-3.89zM105.08 50.59h3.89v3.89h-3.89zM105.08 54.49h3.89v3.89h-3.89zM105.08 62.27h3.89v3.89h-3.89zM105.08 70.05h3.89v3.89h-3.89zM105.08 73.95h3.89v3.89h-3.89zM105.08 77.84h3.89v3.89h-3.89zM105.08 93.41h3.89v3.89h-3.89zM105.08 97.30h3.89v3.89h-3.89zM105.08 105.08h3.89v3.89h-3.89zM105.08 112.86h3.89v3.89h-3.89zM105.08 116.76h3.89v3.89h-3.89zM105.08 128.43h3.89v3.89h-3.89zM105.08 136.22h3.89v3.89h-3.89zM105.08 140.11h3.89v3.89h-3.89zM108.97 3.89h3.89v3.89h-3.89zM108.97 7.78h3.89v3.89h-3.89zM108.97 11.68h3.89v3.89h-3.89zM108.97 19.46h3.89v3.89h-3.89zM108.97 23.35h3.89v3.89h-3.89zM108.97 27.24h3.89v3.89h-3.89zM108.97 35.03h3.89v3.89h-3.89zM108.97 50.59h3.89v3.89h-3.89zM108.97 58.38h3.89v3.89h-3.89zM108.97 62.27h3.89v3.89h-3.89zM108.97 66.16h3.89v3.89h-3.89zM108.97 77.84h3.89v3.89h-3.89zM108.97 81.73h3.89v3.89h-3.89zM108.97 93.41h3.89v3.89h-3.89zM108.97 97.30h3.89v3.89h-3.89zM108.97 101.19h3.89v3.89h-3.89zM108.97 105.08h3.89v3.89h-3.89zM108.97 108.97h3.89v3.89h-3.89zM108.97 112.86h3.89v3.89h-3.89zM108.97 116.76h3.89v3.89h-3.89zM108.97 120.65h3.89v3.89h-3.89zM108.97 124.54h3.89v3.89h-3.89zM108.97 140.11h3.89v3.89h-3.89zM112.86 31.14h3.89v3.89h-3.89zM112.86 35.03h3.89v3.89h-3.89zM112.86 38.92h3.89v3.89h-3.89zM112.86 42.81h3.89v3.89h-3.89zM112.86 66.16h3.89v3.89h-3.89zM112.86 70.05h3.89v3.89h-3.89zM112.86 73.95h3.89v3.89h-3.89zM112.86 81.73h3.89v3.89h-3.89zM112.86 85.62h3.89v3.89h-3.89zM112.86 105.08h3.89v3.89h-3.89zM112.86 108.97h3.89v3.89h-3.89zM112.86 124.54h3.89v3.89h-3.89zM112.86 128.43h3.89v3.89h-3.89zM116.76 0.00h3.89v3.89h-3.89zM116.76 3.89h3.89v3.89h-3.89zM116.76 7.78h3.89v3.89h-3.89zM116.76 11.68h3.89v3.89h-3.89zM116.76 15.57h3.89v3.89h-3.89zM116.76 19.46h3.89v3.89h-3.89zM116.76 23.35h3.89v3.89h-3.89zM116.76 38.92h3.89v3.89h-3.89zM116.76 50.59h3.89v3.89h-3.89zM116.76 54.49h3.89v3.89h-3.89zM116.76 58.38h3.89v3.89h-3.89zM116.76 70.05h3.89v3.89h-3.89zM116.76 77.84h3.89v3.89h-3.89zM116.76 81.73h3.89v3.89h-3.89zM116.76 85.62h3.89v3.89h-3.89zM116.76 93.41h3.89v3.89h-3.89zM116.76 108.97h3.89v3.89h-3.89zM116.76 116.76h3.89v3.89h-3.89zM116.76 124.54h3.89v3.89h-3.89zM116.76 132.32h3.89v3.89h-3.89zM116.76 140.11h3.89v3.89h-3.89zM120.65 0.00h3.89v3.89h-3.89zM120.65 23.35h3.89v3.89h-3.89zM120.65 35.03h3.89v3.89h-3.89zM120.65 46.70h3.89v3.89h-3.89zM120.65 54.49h3.89v3.89h-3.89zM120.65 58.38h3.89v3.89h-3.89zM120.65 62.27h3.89v3.89h-3.89zM120.65 77.84h3.89v3.89h-3.89zM120.65 89.51h3.89v3.89h-3.89zM120.65 101.19h3.89v3.89h-3.89zM120.65 105.08h3.89v3.89h-3.89zM120.65 108.97h3.89v3.89h-3.89zM120.65 124.54h3.89v3.89h-3.89zM120.65 132.32h3.89v3.89h-3.89zM120.65 140.11h3.89v3.89h-3.89zM124.54 0.00h3.89v3.89h-3.89zM124.54 7.78h3.89v3.89h-3.89zM124.54 11.68h3.89v3.89h-3.89zM124.54 15.57h3.89v3.89h-3.89zM124.54 23.35h3.89v3.89h-3.89zM124.54 35.03h3.89v3.89h-3.89zM124.54 42.81h3.89v3.89h-3.89zM124.54 54.49h3.89v3.89h-3.89zM124.54 58.38h3.89v3.89h-3.89zM124.54 77.84h3.89v3.89h-3.89zM124.54 93.41h3.89v3.89h-3.89zM124.54 97.30h3.89v3.89h-3.89zM124.54 108.97h3.89v3.89h-3.89zM124.54 112.86h3.89v3.89h-3.89zM124.54 116.76h3.89v3.89h-3.89zM124.54 120.65h3.89v3.89h-3.89zM124.54 124.54h3.89v3.89h-3.89zM124.54 128.43h3.89v3.89h-3.89zM128.43 0.00h3.89v3.89h-3.89zM128.43 7.78h3.89v3.89h-3.89zM128.43 11.68h3.89v3.89h-3.89zM128.43 15.57h3.89v3.89h-3.89zM128.43 23.35h3.89v3.89h-3.89zM128.43 38.92h3.89v3.89h-3.89zM128.43 46.70h3.89v3.89h-3.89zM128.43 50.59h3.89v3.89h-3.89zM128.43 54.49h3.89v3.89h-3.89zM128.43 62.27h3.89v3.89h-3.89zM128.43 66.16h3.89v3.89h-3.89zM128.43 77.84h3.89v3.89h-3.89zM128.43 81.73h3.89v3.89h-3.89zM128.43 85.62h3.89v3.89h-3.89zM128.43 89.51h3.89v3.89h-3.89zM128.43 93.41h3.89v3.89h-3.89zM128.43 112.86h3.89v3.89h-3.89zM128.43 120.65h3.89v3.89h-3.89zM128.43 136.22h3.89v3.89h-3.89zM132.32 0.00h3.89v3.89h-3.89zM132.32 7.78h3.89v3.89h-3.89zM132.32 11.68h3.89v3.89h-3.89zM132.32 15.57h3.89v3.89h-3.89zM132.32 23.35h3.89v3.89h-3.89zM132.32 31.14h3.89v3.89h-3.89zM132.32 42.81h3.89v3.89h-3.89zM132.32 46.70h3.89v3.89h-3.89zM132.32 50.59h3.89v3.89h-3.89zM132.32 54.49h3.89v3.89h-3.89zM132.32 58.38h3.89v3.89h-3.89zM132.32 70.05h3.89v3.89h-3.89zM132.32 73.95h3.89v3.89h-3.89zM132.32 81.73h3.89v3.89h-3.89zM132.32 85.62h3.89v3.89h-3.89zM132.32 93.41h3.89v3.89h-3.89zM132.32 97.30h3.89v3.89h-3.89zM132.32 108.97h3.89v3.89h-3.89zM132.32 112.86h3.89v3.89h-3.89zM132.32 116.76h3.89v3.89h-3.89zM132.32 128.43h3.89v3.89h-3.89zM132.32 136.22h3.89v3.89h-3.89zM132.32 140.11h3.89v3.89h-3.89zM136.22 0.00h3.89v3.89h-3.89zM136.22 23.35h3.89v3.89h-3.89zM136.22 31.14h3.89v3.89h-3.89zM136.22 42.81h3.89v3.89h-3.89zM136.22 50.59h3.89v3.89h-3.89zM136.22 58.38h3.89v3.89h-3.89zM136.22 62.27h3.89v3.89h-3.89zM136.22 70.05h3.89v3.89h-3.89zM136.22 85.62h3.89v3.89h-3.89zM136.22 97.30h3.89v3.89h-3.89zM136.22 101.19h3.89v3.89h-3.89zM136.22 105.08h3.89v3.89h-3.89zM136.22 108.97h3.89v3.89h-3.89zM136.22 116.76h3.89v3.89h-3.89zM136.22 120.65h3.89v3.89h-3.89zM136.22 124.54h3.89v3.89h-3.89zM136.22 136.22h3.89v3.89h-3.89zM140.11 0.00h3.89v3.89h-3.89zM140.11 3.89h3.89v3.89h-3.89zM140.11 7.78h3.89v3.89h-3.89zM140.11 11.68h3.89v3.89h-3.89zM140.11 15.57h3.89v3.89h-3.89zM140.11 19.46h3.89v3.89h-3.89zM140.11 23.35h3.89v3.89h-3.89zM140.11 38.92h3.89v3.89h-3.89zM140.11 42.81h3.89v3.89h-3.89zM140.11 54.49h3.89v3.89h-3.89zM140.11 62.27h3.89v3.89h-3.89zM140.11 70.05h3.89v3.89h-3.89zM140.11 81.73h3.89v3.89h-3.89zM140.11 89.51h3.89v3.89h-3.89zM140.11 93.41h3.89v3.89h-3.89zM140.11 101.19h3.89v3.89h-3.89zM140.11 105.08h3.89v3.89h-3.89zM140.11 112.86h3.89v3.89h-3.89zM140.11 116.76h3.89v3.89h-3.89zM140.11 124.54h3.89v3.89h-3.89zM140.11 136.22h3.89v3.89h-3.89zM140.11 140.11h3.89v3.89h-3.89z" fill="#000" fill-opacity="0.58"/></svg>
<svg class="a" style="left:1760px;top:950px" width="90" height="30" viewBox="0 0 90 30"><path d="M2 24l8-16 14 8" fill="none" stroke="#1a2a8a" stroke-width="2"/><path d="M64 4v22M53 15h22M64 4l-3 4h6zM64 26l-3-4h6zM53 15l4-3v6zM75 15l-4-3v6z" stroke="#f4f4f4" stroke-width="1.2" fill="#f4f4f4"/></svg>
<div class="a" style="left:1786px;top:927px;width:33px;height:33px;background:rgba(235,235,235,0.6);border:1px solid rgba(200,200,200,0.8);border-radius:4px"></div>
<svg class="a" style="left:1790px;top:930px" width="26" height="24" viewBox="0 0 26 24"><path d="M6 2v8M9 2v8M12 2v8" stroke="#d03030" stroke-width="1"/><path d="M3 14l10-5 9 4-10 5z" fill="#e8e8e8" stroke="#999" stroke-width="0.5"/><path d="M13 11l8 2-8 4z" fill="#d02020"/><text x="5" y="22" font-size="4" fill="#c03030" font-family="Liberation Sans">ER Factory</text></svg></body></html>
